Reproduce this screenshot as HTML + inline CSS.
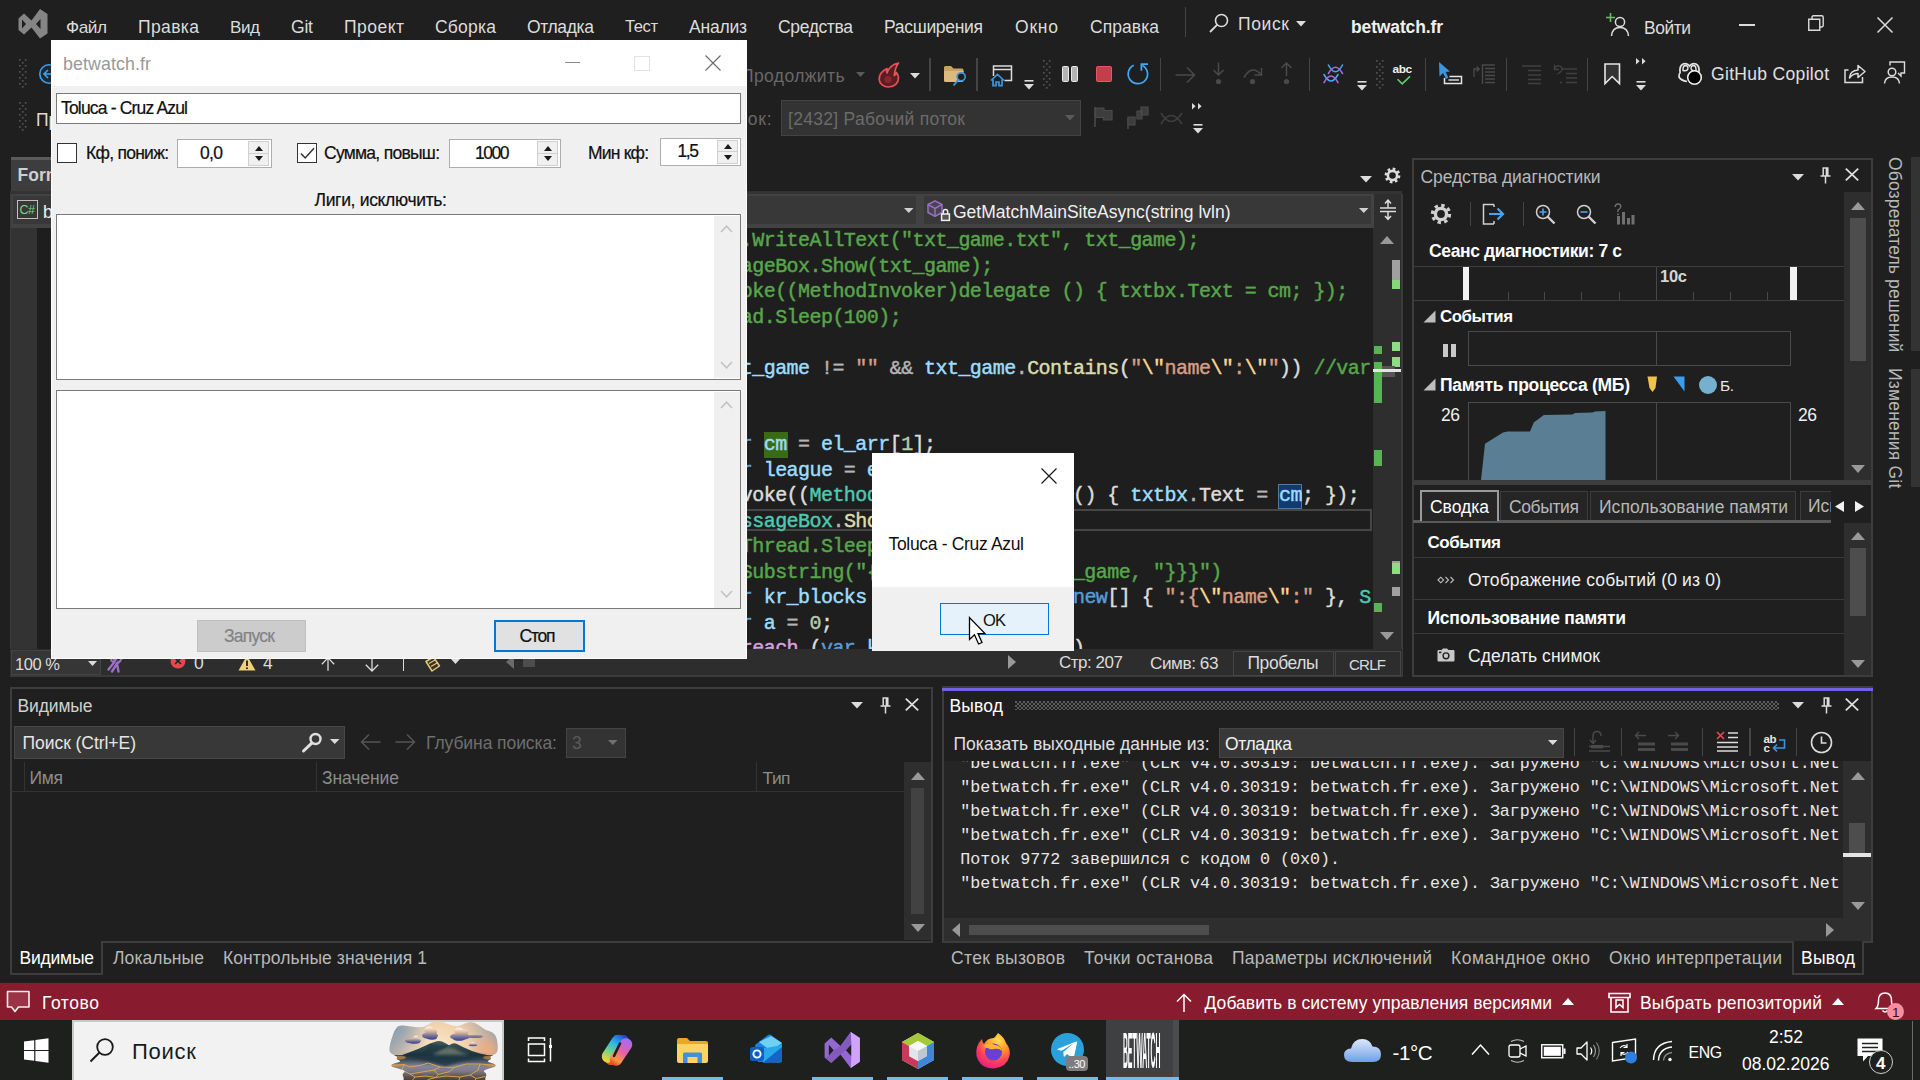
<!DOCTYPE html>
<html lang="ru"><head><meta charset="utf-8"><title>betwatch.fr</title><style>
html,body{margin:0;padding:0;background:#1f1f1f;}
body{width:1920px;height:1080px;position:relative;overflow:hidden;font-family:"Liberation Sans","DejaVu Sans",sans-serif;}
div,span.t,svg{position:absolute;}
span.t{white-space:pre;line-height:1;}
svg{overflow:visible;}
.code span{position:static;}
</style></head><body>
<svg style="left:18px;top:9px;" width="30" height="30" viewBox="0 0 30 30"><path d="M6 4.5 L13.5 11.5 L22 0 L29.5 5 V24.5 L22 29.5 L13.5 18.5 L6 25.5 L0.5 21 V9.5 Z M4 10.5 V19.5 L8 15 Z M22.5 10 V20 L18 15 Z" fill="#858585" fill-rule="evenodd"/></svg>
<span class="t" id="t1" style="left:66px;top:18.92px;font-size:17.22px;color:#dcdcdc;letter-spacing:-0.432px;">Файл</span>
<span class="t" id="t2" style="left:138px;top:18.69px;font-size:17.50px;color:#dcdcdc;letter-spacing:0.375px;">Правка</span>
<span class="t" id="t3" style="left:230px;top:19.05px;font-size:17.07px;color:#dcdcdc;letter-spacing:-0.438px;">Вид</span>
<span class="t" id="t4" style="left:291px;top:18.69px;font-size:17.50px;color:#dcdcdc;letter-spacing:-0.188px;">Git</span>
<span class="t" id="t5" style="left:344px;top:18.69px;font-size:17.50px;color:#dcdcdc;letter-spacing:0.469px;">Проект</span>
<span class="t" id="t6" style="left:435px;top:18.69px;font-size:17.50px;color:#dcdcdc;letter-spacing:0.219px;">Сборка</span>
<span class="t" id="t7" style="left:527px;top:18.69px;font-size:17.50px;color:#dcdcdc;letter-spacing:-0.362px;">Отладка</span>
<span class="t" id="t8" style="left:625px;top:19.45px;font-size:16.60px;color:#dcdcdc;letter-spacing:-0.448px;">Тест</span>
<span class="t" id="t9" style="left:689px;top:18.69px;font-size:17.50px;color:#dcdcdc;letter-spacing:-0.219px;">Анализ</span>
<span class="t" id="t10" style="left:778px;top:18.69px;font-size:17.50px;color:#dcdcdc;letter-spacing:-0.362px;">Средства</span>
<span class="t" id="t11" style="left:884px;top:18.69px;font-size:17.50px;color:#dcdcdc;letter-spacing:-0.309px;">Расширения</span>
<span class="t" id="t12" style="left:1015px;top:18.69px;font-size:17.50px;color:#dcdcdc;letter-spacing:0.776px;">Окно</span>
<span class="t" id="t13" style="left:1090px;top:18.69px;font-size:17.50px;color:#dcdcdc;letter-spacing:0.057px;">Справка</span>
<div style="left:1185px;top:7px;width:1px;height:30px;background:#454545;"></div>
<svg style="left:1208px;top:12px;" width="22" height="22" viewBox="0 0 22 22"><circle cx="13.5" cy="8.5" r="6" fill="none" stroke="#dcdcdc" stroke-width="1.6"/><path d="M9.3 12.7 L2 20" stroke="#dcdcdc" stroke-width="1.8" fill="none"/></svg>
<span class="t" id="t14" style="left:1238px;top:16.19px;font-size:17.50px;color:#dcdcdc;letter-spacing:0.625px;">Поиск</span>
<svg style="left:1296px;top:21px;" width="10" height="6" viewBox="0 0 10 6"><path d="M0 0 H10 L5 5.5 Z" fill="#dcdcdc"/></svg>
<span class="t" id="t15" style="left:1351px;top:19.19px;font-size:17.50px;color:#f0f0f0;font-weight:700;letter-spacing:-0.136px;">betwatch.fr</span>
<svg style="left:1606px;top:13px;" width="24" height="24" viewBox="0 0 24 24"><circle cx="14" cy="9" r="4.6" fill="none" stroke="#dcdcdc" stroke-width="1.5"/><path d="M5.5 23 C6 16.5 10 14.5 14 14.5 C18 14.5 22 16.5 22.5 23" fill="none" stroke="#dcdcdc" stroke-width="1.5"/><path d="M4.5 0 V9 M0 4.5 H9" stroke="#5fc35f" stroke-width="1.6"/></svg>
<span class="t" id="t16" style="left:1644px;top:20.24px;font-size:17.43px;color:#dcdcdc;letter-spacing:-0.441px;">Войти</span>
<div style="left:1739px;top:24px;width:16px;height:1.5px;background:#dcdcdc;"></div>
<svg style="left:1808px;top:15px;" width="16" height="16" viewBox="0 0 16 16"><path d="M0.75 4.25 H11.75 V15.25 H0.75 Z" fill="none" stroke="#dcdcdc" stroke-width="1.4"/><path d="M4 4 V2.2 Q4 0.8 5.4 0.8 H13.8 Q15.2 0.8 15.2 2.2 V10.6 Q15.2 12 13.8 12 H12" fill="none" stroke="#dcdcdc" stroke-width="1.4"/></svg>
<svg style="left:1877px;top:17px;" width="16" height="16" viewBox="0 0 16 16"><path d="M0.5 0.5 L15.5 15.5 M15.5 0.5 L0.5 15.5" stroke="#dcdcdc" stroke-width="1.5"/></svg>
<svg style="left:18.7px;top:58.7px;" width="8" height="29" viewBox="0 0 8 29"><rect x="0" y="0" width="1.7" height="1.7" fill="#525252"/><rect x="5.8" y="0" width="1.7" height="1.7" fill="#525252"/><rect x="2.9" y="3" width="1.7" height="1.7" fill="#525252"/><rect x="0" y="6" width="1.7" height="1.7" fill="#525252"/><rect x="5.8" y="6" width="1.7" height="1.7" fill="#525252"/><rect x="2.9" y="9" width="1.7" height="1.7" fill="#525252"/><rect x="0" y="12" width="1.7" height="1.7" fill="#525252"/><rect x="5.8" y="12" width="1.7" height="1.7" fill="#525252"/><rect x="2.9" y="15" width="1.7" height="1.7" fill="#525252"/><rect x="0" y="18" width="1.7" height="1.7" fill="#525252"/><rect x="5.8" y="18" width="1.7" height="1.7" fill="#525252"/><rect x="2.9" y="21" width="1.7" height="1.7" fill="#525252"/><rect x="0" y="24" width="1.7" height="1.7" fill="#525252"/><rect x="5.8" y="24" width="1.7" height="1.7" fill="#525252"/><rect x="2.9" y="27" width="1.7" height="1.7" fill="#525252"/></svg>
<svg style="left:18.7px;top:101.7px;" width="8" height="29" viewBox="0 0 8 29"><rect x="0" y="0" width="1.7" height="1.7" fill="#525252"/><rect x="5.8" y="0" width="1.7" height="1.7" fill="#525252"/><rect x="2.9" y="3" width="1.7" height="1.7" fill="#525252"/><rect x="0" y="6" width="1.7" height="1.7" fill="#525252"/><rect x="5.8" y="6" width="1.7" height="1.7" fill="#525252"/><rect x="2.9" y="9" width="1.7" height="1.7" fill="#525252"/><rect x="0" y="12" width="1.7" height="1.7" fill="#525252"/><rect x="5.8" y="12" width="1.7" height="1.7" fill="#525252"/><rect x="2.9" y="15" width="1.7" height="1.7" fill="#525252"/><rect x="0" y="18" width="1.7" height="1.7" fill="#525252"/><rect x="5.8" y="18" width="1.7" height="1.7" fill="#525252"/><rect x="2.9" y="21" width="1.7" height="1.7" fill="#525252"/><rect x="0" y="24" width="1.7" height="1.7" fill="#525252"/><rect x="5.8" y="24" width="1.7" height="1.7" fill="#525252"/><rect x="2.9" y="27" width="1.7" height="1.7" fill="#525252"/></svg>
<svg style="left:38px;top:63px;" width="22" height="22" viewBox="0 0 22 22"><circle cx="11" cy="11" r="9.2" fill="#1c2935" stroke="#3fa0ea" stroke-width="1.6"/><path d="M16 11 H6 M10 7 L6 11 L10 15" fill="none" stroke="#3fa0ea" stroke-width="1.6"/></svg>
<span class="t" id="t17" style="left:36px;top:111.69px;font-size:17.50px;color:#dcdcdc;">Процесс:</span>
<span class="t" id="t18" style="left:741px;top:67.69px;font-size:17.50px;color:#686868;letter-spacing:0.384px;">Продолжить</span>
<svg style="left:856px;top:72px;" width="9" height="5" viewBox="0 0 9 5"><path d="M0 0 H9 L4.5 5 Z" fill="#5a5a5a"/></svg>
<svg style="left:878px;top:62px;" width="23" height="26" viewBox="0 0 23 26"><path d="M20.5 1 C15 2 10 6.5 9 11 C8.5 9.5 8.5 8 9 6.5 C4 9 1 13.5 1.2 17.5 C1.5 22 5.5 25 10.5 25 C16.5 25 20.5 21 20.5 16 C20.5 13.5 19.5 12 18.5 10.5 C18 12 17.5 12.8 16.2 13.5 C16.8 9 17.5 5 20.5 1 Z" fill="#5a1d22" stroke="#e8505b" stroke-width="1.7" stroke-linejoin="round"/><circle cx="10" cy="17.5" r="3.6" fill="#8a2630"/></svg>
<svg style="left:910px;top:73px;" width="10" height="6" viewBox="0 0 10 6"><path d="M0 0 H10 L5 5.5 Z" fill="#dcdcdc"/></svg>
<div style="left:929px;top:58px;width:1.5px;height:33px;background:#454545;"></div>
<svg style="left:943px;top:64px;" width="24" height="23" viewBox="0 0 24 23"><path d="M1 3.5 Q1 2 2.5 2 H8 L10.5 4.5 H19 Q20.5 4.5 20.5 6 V8 H1 Z" fill="#c9a35f"/><path d="M1 7 H20.5 V16.5 Q20.5 18 19 18 H2.5 Q1 18 1 16.5 Z" fill="#dcb97c"/><circle cx="18.2" cy="12.8" r="4" fill="#1f1f1f" stroke="#3a96dd" stroke-width="1.7"/><path d="M15.3 15.8 L10.5 21.5" stroke="#3a96dd" stroke-width="1.9"/></svg>
<div style="left:976px;top:58px;width:1.5px;height:33px;background:#454545;"></div>
<svg style="left:990px;top:64px;" width="23" height="23" viewBox="0 0 23 23"><path d="M3.5 12 V2 H21.5 V16.5 H14.5" fill="none" stroke="#dcdcdc" stroke-width="1.5"/><path d="M3.5 5.5 H21.5" stroke="#dcdcdc" stroke-width="1.5"/><path d="M1 16.5 L7.5 10.5 L14 16.5 M3 15.5 V21.7 H6 V18 H9 V21.7 H12 V15.5" fill="none" stroke="#3a96dd" stroke-width="1.7"/></svg>
<svg style="left:1024px;top:80px;" width="10" height="10" viewBox="0 0 10 10"><rect x="0.5" y="0" width="9" height="1.6" fill="#dcdcdc"/><path d="M0 4 H10 L5 9.5 Z" fill="#dcdcdc"/></svg>
<svg style="left:1042.5px;top:59.5px;" width="8" height="29" viewBox="0 0 8 29"><rect x="0" y="0" width="1.7" height="1.7" fill="#525252"/><rect x="5.8" y="0" width="1.7" height="1.7" fill="#525252"/><rect x="2.9" y="3" width="1.7" height="1.7" fill="#525252"/><rect x="0" y="6" width="1.7" height="1.7" fill="#525252"/><rect x="5.8" y="6" width="1.7" height="1.7" fill="#525252"/><rect x="2.9" y="9" width="1.7" height="1.7" fill="#525252"/><rect x="0" y="12" width="1.7" height="1.7" fill="#525252"/><rect x="5.8" y="12" width="1.7" height="1.7" fill="#525252"/><rect x="2.9" y="15" width="1.7" height="1.7" fill="#525252"/><rect x="0" y="18" width="1.7" height="1.7" fill="#525252"/><rect x="5.8" y="18" width="1.7" height="1.7" fill="#525252"/><rect x="2.9" y="21" width="1.7" height="1.7" fill="#525252"/><rect x="0" y="24" width="1.7" height="1.7" fill="#525252"/><rect x="5.8" y="24" width="1.7" height="1.7" fill="#525252"/><rect x="2.9" y="27" width="1.7" height="1.7" fill="#525252"/></svg>
<div style="left:1062px;top:66px;width:6.7px;height:16px;background:#b4b4b4;border:1.5px solid #ececec;box-sizing:border-box;border-radius:1.5px;"></div>
<div style="left:1071.2px;top:66px;width:6.7px;height:16px;background:#b4b4b4;border:1.5px solid #ececec;box-sizing:border-box;border-radius:1.5px;"></div>
<div style="left:1096px;top:66px;width:16px;height:16px;background:#c0404d;border:1.5px solid #f05262;box-sizing:border-box;border-radius:1.5px;"></div>
<svg style="left:1127px;top:61px;" width="24" height="25" viewBox="0 0 24 25"><path d="M6.75 4.2 A9.7 9.7 0 1 0 15.4 4.4" fill="none" stroke="#3fa9f5" stroke-width="1.7"/><path d="M21 3.1 H14.4 V9.8" fill="none" stroke="#3fa9f5" stroke-width="1.8"/></svg>
<div style="left:1159.5px;top:58px;width:1.5px;height:33px;background:#454545;"></div>
<svg style="left:1175px;top:65px;" width="21" height="20" viewBox="0 0 21 20"><path d="M0.5 10 H19.5 M12 2.5 L19.5 10 L12 17.5" fill="none" stroke="#4a4a4a" stroke-width="1.5"/></svg>
<svg style="left:1212px;top:62px;" width="13" height="23" viewBox="0 0 13 23"><path d="M6.5 0.5 V13 M1.5 8 L6.5 13 L11.5 8" fill="none" stroke="#4a4a4a" stroke-width="1.5"/><circle cx="6.5" cy="19.5" r="2.6" fill="#4a4a4a"/></svg>
<svg style="left:1243px;top:66px;" width="21" height="19" viewBox="0 0 21 19"><path d="M1 11.5 Q9 -2 18 8.5 M18.5 2 V9 H11.5" fill="none" stroke="#4a4a4a" stroke-width="1.5"/><circle cx="9.5" cy="15.5" r="2.6" fill="#4a4a4a"/></svg>
<svg style="left:1280px;top:62px;" width="13" height="23" viewBox="0 0 13 23"><path d="M6.5 14 V1 M1.5 6 L6.5 1 L11.5 6" fill="none" stroke="#4a4a4a" stroke-width="1.5"/><circle cx="6.5" cy="19.5" r="2.6" fill="#4a4a4a"/></svg>
<div style="left:1308.5px;top:58px;width:1.5px;height:33px;background:#454545;"></div>
<svg style="left:1322px;top:64px;" width="23" height="20" viewBox="0 0 23 20"><g fill="none" stroke-width="1.6" stroke-linecap="round"><path d="M6.4 1 Q13.5 14.4 20.5 1" stroke="#3fa9f5"/><path d="M6.4 9.5 Q13.5 -2.9 20.5 9.5" stroke="#a86bd0"/><path d="M2 10.5 Q9 23.5 16 10.5" stroke="#3fa9f5"/><path d="M2 18.6 Q9 5.4 16 18.6" stroke="#a86bd0"/></g></svg>
<svg style="left:1357px;top:81px;" width="10" height="10" viewBox="0 0 10 10"><rect x="0.5" y="0" width="9" height="1.6" fill="#dcdcdc"/><path d="M0 4 H10 L5 9.5 Z" fill="#dcdcdc"/></svg>
<svg style="left:1375.5px;top:59.5px;" width="8" height="29" viewBox="0 0 8 29"><rect x="0" y="0" width="1.7" height="1.7" fill="#525252"/><rect x="5.8" y="0" width="1.7" height="1.7" fill="#525252"/><rect x="2.9" y="3" width="1.7" height="1.7" fill="#525252"/><rect x="0" y="6" width="1.7" height="1.7" fill="#525252"/><rect x="5.8" y="6" width="1.7" height="1.7" fill="#525252"/><rect x="2.9" y="9" width="1.7" height="1.7" fill="#525252"/><rect x="0" y="12" width="1.7" height="1.7" fill="#525252"/><rect x="5.8" y="12" width="1.7" height="1.7" fill="#525252"/><rect x="2.9" y="15" width="1.7" height="1.7" fill="#525252"/><rect x="0" y="18" width="1.7" height="1.7" fill="#525252"/><rect x="5.8" y="18" width="1.7" height="1.7" fill="#525252"/><rect x="2.9" y="21" width="1.7" height="1.7" fill="#525252"/><rect x="0" y="24" width="1.7" height="1.7" fill="#525252"/><rect x="5.8" y="24" width="1.7" height="1.7" fill="#525252"/><rect x="2.9" y="27" width="1.7" height="1.7" fill="#525252"/></svg>
<span class="t" id="t19" style="left:1392.5px;top:64.48px;font-size:11.83px;color:#f0f0f0;font-weight:700;letter-spacing:-0.445px;">abc</span>
<svg style="left:1396px;top:75px;" width="16" height="10" viewBox="0 0 16 10"><path d="M1.5 4.2 L6.2 8.9 L14 1.4" fill="none" stroke="#5fd068" stroke-width="1.6"/></svg>
<div style="left:1424.5px;top:58px;width:1.5px;height:33px;background:#454545;"></div>
<svg style="left:1438px;top:61px;" width="26" height="25" viewBox="0 0 26 25"><path d="M1 1 L1.5 15.5 L5 12 L8 18 L10.4 16.8 L7.6 11 L12 10.6 Z" fill="#3a96dd"/><path d="M6.5 17 V22.5 H23.5 V15.5 H11.5" fill="none" stroke="#e6e6e6" stroke-width="1.5"/><path d="M10.5 19 H21" stroke="#e6e6e6" stroke-width="1.4"/></svg>
<svg style="left:1473px;top:64px;" width="23" height="21" viewBox="0 0 23 21"><path d="M1 13 V5 H6 M3.5 2.5 L6.3 5 L3.5 7.5" fill="none" stroke="#4a4a4a" stroke-width="1.3"/><path d="M9.5 20 V1 H22 M12 4.5 H22 M12 8 H22 M12 11.5 H22 M12 15 H22 M12 18.5 H22" fill="none" stroke="#4a4a4a" stroke-width="1.4"/></svg>
<div style="left:1505.5px;top:58px;width:1.5px;height:33px;background:#454545;"></div>
<svg style="left:1521px;top:65px;" width="21" height="19" viewBox="0 0 21 19"><path d="M1 1 H20 M7 5.5 H20 M7 10 H20 M7 14.5 H20 M7 18.5 H20" stroke="#404040" stroke-width="1.4"/></svg>
<svg style="left:1553px;top:64px;" width="25" height="21" viewBox="0 0 25 21"><path d="M1 5 Q5 -1 9 4 Q10 7 4.5 10 M1.5 0.5 V5.5 H6" fill="none" stroke="#404040" stroke-width="1.4"/><path d="M9 5 H24 M13 9.5 H24 M13 14 H24 M13 18.5 H24 M7 18.5 H9" stroke="#404040" stroke-width="1.4"/></svg>
<div style="left:1586.5px;top:58px;width:1.5px;height:33px;background:#454545;"></div>
<svg style="left:1604px;top:63px;" width="17" height="22" viewBox="0 0 17 22"><path d="M1 1 H15.5 V20.5 L8.2 13.5 L1 20.5 Z" fill="#333" stroke="#e6e6e6" stroke-width="1.6" stroke-linejoin="miter"/></svg>
<svg style="left:1636px;top:58px;" width="11" height="7" viewBox="0 0 11 7"><path d="M0 0 L3.6 3.2 L0 6.4 Z M6 0 L9.6 3.2 L6 6.4 Z" fill="#dcdcdc"/></svg>
<svg style="left:1636px;top:81px;" width="10" height="10" viewBox="0 0 10 10"><rect x="0.5" y="0" width="9" height="1.6" fill="#dcdcdc"/><path d="M0 4 H10 L5 9.5 Z" fill="#dcdcdc"/></svg>
<svg style="left:1678px;top:61px;" width="25" height="25" viewBox="0 0 25 25"><path d="M2.2 12 Q1 5 5 3 Q9 1.5 11.5 5 Q14 1.5 18 3 Q22 5 20.8 12 M2.2 11.5 Q0.8 13 1 16 Q3 19.5 9 20.5" fill="none" stroke="#e6e6e6" stroke-width="1.7"/><path d="M7 4.5 Q4.8 5 5 9.5 Q9 10.5 9.8 8 Q10.5 4.5 7 4.5 Z M16 4.5 Q18.2 5 18 9.5 Q14 10.5 13.2 8 Q12.5 4.5 16 4.5 Z" fill="none" stroke="#e6e6e6" stroke-width="1.5"/><circle cx="16.5" cy="16.5" r="6.8" fill="#000" stroke="#f0f0f0" stroke-width="1.6"/></svg>
<span class="t" id="t20" style="left:1711px;top:65.69px;font-size:17.50px;color:#e0e0e0;letter-spacing:0.322px;">GitHub Copilot</span>
<svg style="left:1844px;top:62px;" width="22" height="22" viewBox="0 0 22 22"><path d="M4.5 8 H1 V20.5 H18.5 V15" fill="none" stroke="#dcdcdc" stroke-width="1.5"/><path d="M5.5 16 Q6 8.5 14 8 V3.5 L21 9.5 L14 15.5 V11.5 Q9 11.5 5.5 16 Z" fill="none" stroke="#dcdcdc" stroke-width="1.5" stroke-linejoin="round"/></svg>
<svg style="left:1883px;top:61px;" width="23" height="24" viewBox="0 0 23 24"><path d="M7 4.5 V1 H21.5 V12 H18 V15 L15 12" fill="none" stroke="#dcdcdc" stroke-width="1.4"/><circle cx="9" cy="11" r="3.8" fill="#1f1f1f" stroke="#dcdcdc" stroke-width="1.5"/><path d="M1.5 22.5 Q2 16 9 16 Q16 16 16.5 22.5" fill="#1f1f1f" stroke="#dcdcdc" stroke-width="1.5"/></svg>
<span class="t" id="t21" style="left:716px;top:110.69px;font-size:17.50px;color:#686868;letter-spacing:0.700px;">Поток:</span>
<div style="left:781px;top:100px;width:300px;height:36px;background:#333333;border:1px solid #434343;box-sizing:border-box;"></div>
<span class="t" id="t22" style="left:788px;top:110.69px;font-size:17.50px;color:#6b6b6b;letter-spacing:0.301px;">[2432] Рабочий поток</span>
<svg style="left:1065px;top:115px;" width="10" height="6" viewBox="0 0 10 6"><path d="M0 0 H10 L5 5.5 Z" fill="#5a5a5a"/></svg>
<svg style="left:1093px;top:106px;" width="20" height="22" viewBox="0 0 20 22"><path d="M2 1 V21" stroke="#4a4a4a" stroke-width="1.6"/><path d="M2.5 2 H11 V4.5 H19 V14 H10.5 V11.5 H2.5 Z" fill="#3d3d3d" stroke="#4a4a4a" stroke-width="1.2"/></svg>
<svg style="left:1126px;top:106px;" width="24" height="24" viewBox="0 0 24 24"><path d="M2 12 V23" stroke="#4a4a4a" stroke-width="1.5"/><path d="M2 11 H9 V19 H2 Z M11 5 H16 V13 H11 Z M15 1 H22 V9 H15 Z" fill="#3d3d3d" stroke="#4a4a4a" stroke-width="1.2"/></svg>
<svg style="left:1160px;top:110px;" width="24" height="16" viewBox="0 0 24 16"><path d="M1 3 Q11 20 22 3 M1 14 Q11 -3 22 14" fill="none" stroke="#3f3f3f" stroke-width="1.5"/></svg>
<svg style="left:1192px;top:103px;" width="11" height="7" viewBox="0 0 11 7"><path d="M0 0 L3.6 3.2 L0 6.4 Z M6 0 L9.6 3.2 L6 6.4 Z" fill="#dcdcdc"/></svg>
<svg style="left:1193px;top:124px;" width="10" height="10" viewBox="0 0 10 10"><rect x="0.5" y="0" width="9" height="1.6" fill="#dcdcdc"/><path d="M0 4 H10 L5 9.5 Z" fill="#dcdcdc"/></svg>
<div style="left:11px;top:157px;width:60px;height:34px;background:#3d3d3d;"></div>
<div style="left:11px;top:157px;width:60px;height:3px;background:#5a5a5a;"></div>
<span class="t" id="t23" style="left:17.5px;top:166.69px;font-size:17.50px;color:#cfcfcf;font-weight:700;">Form1.cs</span>
<div style="left:10px;top:191px;width:1392px;height:3px;background:#333333;"></div>
<div style="left:10px;top:194px;width:1364px;height:34px;background:#424242;"></div>
<div style="left:13px;top:196px;width:903px;height:28px;background:#383838;"></div>
<div style="left:924px;top:196px;width:447px;height:28px;background:#383838;"></div>
<div style="left:1374px;top:194px;width:28px;height:34px;background:#2e2e2e;"></div>
<div style="left:16.5px;top:200px;width:21px;height:18.5px;border:1.5px solid #c0c0c0;box-sizing:border-box;"></div>
<span class="t" id="t24" style="left:19.5px;top:204.44px;font-size:12.47px;color:#7fd67f;letter-spacing:-0.453px;">C#</span>
<span class="t" id="t25" style="left:43px;top:203.69px;font-size:17.50px;color:#f0f0f0;">betwatch.fr.Form1</span>
<svg style="left:904px;top:208px;" width="10" height="6" viewBox="0 0 10 6"><path d="M0 0 H9.5 L4.75 5 Z" fill="#d0d0d0"/></svg>
<svg style="left:927px;top:200px;" width="24" height="22" viewBox="0 0 24 22"><path d="M8 0.8 L15 4.5 V12.5 L8 16.3 L1 12.5 V4.5 Z" fill="#4a4352" stroke="#9b6fc4" stroke-width="1.5" stroke-linejoin="round"/><path d="M1 4.5 L8 8.3 L15 4.5 M8 8.3 V16.3" fill="none" stroke="#9b6fc4" stroke-width="1.5"/><rect x="14.6" y="14" width="7.8" height="6.4" fill="#555" stroke="#f0f0f0" stroke-width="1.5"/><path d="M16.3 14 V11.8 Q16.3 9.6 18.5 9.6 Q20.7 9.6 20.7 11.8 V14" fill="none" stroke="#f0f0f0" stroke-width="1.5"/></svg>
<span class="t" id="t26" style="left:953px;top:203.69px;font-size:17.50px;color:#f0f0f0;letter-spacing:0.010px;">GetMatchMainSiteAsync(string lvln)</span>
<svg style="left:1359px;top:208px;" width="10" height="6" viewBox="0 0 10 6"><path d="M0 0 H9.5 L4.75 5 Z" fill="#d0d0d0"/></svg>
<svg style="left:1360px;top:176px;" width="12" height="7" viewBox="0 0 12 7"><path d="M0 0 H12 L6 6.5 Z" fill="#dcdcdc"/></svg>
<svg style="left:1384px;top:167px;" width="17" height="17" viewBox="0 0 17 17"><g fill="none" stroke="#dcdcdc"><circle cx="8.5" cy="8.5" r="4.6" stroke-width="2.6"/><circle cx="8.5" cy="8.5" r="6.6" stroke-width="2.6" stroke-dasharray="2.6 2.58"/></g></svg>
<svg style="left:1379px;top:199px;" width="18" height="22" viewBox="0 0 18 22"><path d="M1 9 H17 M1 12.5 H17" stroke="#dcdcdc" stroke-width="1.5"/><path d="M9 9 V1.5 M6 4.5 L9 1.2 L12 4.5 M9 12.5 V20 M6 17 L9 20.3 L12 17" fill="none" stroke="#dcdcdc" stroke-width="1.5"/></svg>
<div style="left:10px;top:228px;width:1392px;height:421px;background:#1e1e1e;"></div>
<div style="left:9.5px;top:194px;width:1.5px;height:483px;background:#3a3a3a;"></div>
<div style="left:11px;top:228px;width:26px;height:421px;background:#333333;"></div>
<div style="left:1373px;top:228px;width:29px;height:421px;background:#2e2e2e;"></div>
<div style="left:1401px;top:194px;width:2px;height:483px;background:#3a3a3a;"></div>
<svg style="left:1380px;top:236px;" width="14" height="8" viewBox="0 0 14 8"><path d="M7 0 L14 8 H0 Z" fill="#999"/></svg>
<svg style="left:1380px;top:632px;" width="14" height="8" viewBox="0 0 14 8"><path d="M7 8 L14 0 H0 Z" fill="#999"/></svg>
<div style="left:1392px;top:260px;width:8px;height:20px;background:#a0a0a0;"></div>
<div style="left:1392px;top:279.5px;width:8px;height:9px;background:#86d67b;"></div>
<div style="left:1374px;top:346px;width:8px;height:8px;background:#57b356;"></div>
<div style="left:1374px;top:361.5px;width:8px;height:41.5px;background:#57b356;"></div>
<div style="left:1392px;top:342px;width:8px;height:9px;background:#8fdc86;"></div>
<div style="left:1392px;top:357px;width:8px;height:9.5px;background:#8fdc86;"></div>
<div style="left:1382px;top:366px;width:13px;height:11px;background:#555;"></div>
<div style="left:1373px;top:369px;width:28px;height:3px;background:#e4e4e4;"></div>
<div style="left:1374px;top:449.5px;width:8px;height:16.5px;background:#57b356;"></div>
<div style="left:1392px;top:561px;width:8px;height:2px;background:#a0a0a0;"></div>
<div style="left:1392px;top:563px;width:8px;height:11px;background:#8fdc86;"></div>
<div style="left:1392px;top:586.5px;width:8px;height:9.5px;background:#a0a0a0;"></div>
<div style="left:1374px;top:602.5px;width:8px;height:9.5px;background:#57b356;"></div>
<div style="left:764px;top:432px;width:23.5px;height:25.5px;background:#3b6a16;"></div>
<div style="left:1278px;top:483.5px;width:23.5px;height:25.5px;background:#113a6e;border:1px solid #4f7aa8;box-sizing:border-box;"></div>
<div style="left:60px;top:509px;width:1312px;height:22px;border:2px solid #464646;box-sizing:border-box;"></div>
<span class="t code" style="left:740.80px;top:231.07px;font-family:'Liberation Mono','DejaVu Sans Mono',monospace;font-size:20px;letter-spacing:-0.550px;-webkit-text-stroke:0.45px currentColor;"><span style="color:#57a64a">.WriteAllText("txt_game.txt", txt_game);</span></span>
<span class="t code" style="left:740.80px;top:256.57px;font-family:'Liberation Mono','DejaVu Sans Mono',monospace;font-size:20px;letter-spacing:-0.550px;-webkit-text-stroke:0.45px currentColor;"><span style="color:#57a64a">ageBox.Show(txt_game);</span></span>
<span class="t code" style="left:740.80px;top:282.07px;font-family:'Liberation Mono','DejaVu Sans Mono',monospace;font-size:20px;letter-spacing:-0.550px;-webkit-text-stroke:0.45px currentColor;"><span style="color:#57a64a">oke((MethodInvoker)delegate () { txtbx.Text = cm; });</span></span>
<span class="t code" style="left:740.80px;top:307.57px;font-family:'Liberation Mono','DejaVu Sans Mono',monospace;font-size:20px;letter-spacing:-0.550px;-webkit-text-stroke:0.45px currentColor;"><span style="color:#57a64a">ad.Sleep(100);</span></span>
<span class="t code" style="left:740.80px;top:358.57px;font-family:'Liberation Mono','DejaVu Sans Mono',monospace;font-size:20px;letter-spacing:-0.550px;-webkit-text-stroke:0.45px currentColor;"><span style="color:#9cdcfe">t_game</span><span style="color:#b4b4b4"> != </span><span style="color:#d69d85">""</span><span style="color:#b4b4b4"> &amp;&amp; </span><span style="color:#9cdcfe">txt_game</span><span style="color:#b4b4b4">.</span><span style="color:#dcdcaa">Contains</span><span style="color:#dcdcdc">(</span><span style="color:#d69d85">"</span><span style="color:#ffd68f">\"</span><span style="color:#d69d85">name</span><span style="color:#ffd68f">\"</span><span style="color:#d69d85">:</span><span style="color:#ffd68f">\"</span><span style="color:#d69d85">"</span><span style="color:#dcdcdc">))</span><span style="color:#dcdcdc"> </span><span style="color:#57a64a">//var</span></span>
<span class="t code" style="left:740.80px;top:435.07px;font-family:'Liberation Mono','DejaVu Sans Mono',monospace;font-size:20px;letter-spacing:-0.550px;-webkit-text-stroke:0.45px currentColor;"><span style="color:#569cd6">r</span><span style="color:#dcdcdc"> </span><span style="color:#9cdcfe">cm</span><span style="color:#b4b4b4"> = </span><span style="color:#9cdcfe">el_arr</span><span style="color:#dcdcdc">[</span><span style="color:#b5cea8">1</span><span style="color:#dcdcdc">];</span></span>
<span class="t code" style="left:740.80px;top:460.57px;font-family:'Liberation Mono','DejaVu Sans Mono',monospace;font-size:20px;letter-spacing:-0.550px;-webkit-text-stroke:0.45px currentColor;"><span style="color:#569cd6">r</span><span style="color:#dcdcdc"> </span><span style="color:#9cdcfe">league</span><span style="color:#b4b4b4"> = </span><span style="color:#9cdcfe">el_arr</span><span style="color:#dcdcdc">[</span><span style="color:#b5cea8">2</span><span style="color:#dcdcdc">];</span></span>
<span class="t code" style="left:740.80px;top:486.07px;font-family:'Liberation Mono','DejaVu Sans Mono',monospace;font-size:20px;letter-spacing:-0.550px;-webkit-text-stroke:0.45px currentColor;"><span style="color:#dcdcdc">voke</span><span style="color:#dcdcdc">((</span><span style="color:#4ec9b0">MethodInvoker</span><span style="color:#dcdcdc">)</span><span style="color:#569cd6">delegate</span><span style="color:#dcdcdc"> () { </span><span style="color:#9cdcfe">txtbx</span><span style="color:#b4b4b4">.</span><span style="color:#dcdcdc">Text</span><span style="color:#b4b4b4"> = </span><span style="color:#9cdcfe">cm</span><span style="color:#dcdcdc">; });</span></span>
<span class="t code" style="left:740.80px;top:511.57px;font-family:'Liberation Mono','DejaVu Sans Mono',monospace;font-size:20px;letter-spacing:-0.550px;-webkit-text-stroke:0.45px currentColor;"><span style="color:#4ec9b0">ssageBox</span><span style="color:#b4b4b4">.</span><span style="color:#dcdcaa">Show</span><span style="color:#dcdcdc">(</span><span style="color:#9cdcfe">cm</span><span style="color:#dcdcdc">);</span></span>
<span class="t code" style="left:740.80px;top:537.07px;font-family:'Liberation Mono','DejaVu Sans Mono',monospace;font-size:20px;letter-spacing:-0.550px;-webkit-text-stroke:0.45px currentColor;"><span style="color:#57a64a">Thread.Sleep(100);</span></span>
<span class="t code" style="left:740.80px;top:562.57px;font-family:'Liberation Mono','DejaVu Sans Mono',monospace;font-size:20px;letter-spacing:-0.550px;-webkit-text-stroke:0.45px currentColor;"><span style="color:#57a64a">Substring("{\"name\":\"", txt_game, "}}}")</span></span>
<span class="t code" style="left:740.80px;top:588.07px;font-family:'Liberation Mono','DejaVu Sans Mono',monospace;font-size:20px;letter-spacing:-0.550px;-webkit-text-stroke:0.45px currentColor;"><span style="color:#569cd6">r</span><span style="color:#dcdcdc"> </span><span style="color:#9cdcfe">kr_blocks</span><span style="color:#b4b4b4"> = </span><span style="color:#9cdcfe">txt_game</span><span style="color:#b4b4b4">.</span><span style="color:#dcdcaa">Split</span><span style="color:#dcdcdc">(</span><span style="color:#569cd6">new</span><span style="color:#dcdcdc">[] { </span><span style="color:#d69d85">":{</span><span style="color:#ffd68f">\"</span><span style="color:#d69d85">name</span><span style="color:#ffd68f">\"</span><span style="color:#d69d85">:"</span><span style="color:#dcdcdc"> }, </span><span style="color:#4ec9b0">S</span></span>
<span class="t code" style="left:740.80px;top:613.57px;font-family:'Liberation Mono','DejaVu Sans Mono',monospace;font-size:20px;letter-spacing:-0.550px;-webkit-text-stroke:0.45px currentColor;"><span style="color:#569cd6">r</span><span style="color:#dcdcdc"> </span><span style="color:#9cdcfe">a</span><span style="color:#b4b4b4"> = </span><span style="color:#b5cea8">0</span><span style="color:#dcdcdc">;</span></span>
<span class="t code" style="left:740.80px;top:639.07px;font-family:'Liberation Mono','DejaVu Sans Mono',monospace;font-size:20px;letter-spacing:-0.550px;-webkit-text-stroke:0.45px currentColor;"><span style="color:#d8a0df">reach</span><span style="color:#dcdcdc"> (</span><span style="color:#569cd6">var</span><span style="color:#dcdcdc"> </span><span style="color:#9cdcfe">kr_block</span><span style="color:#dcdcdc"> </span><span style="color:#d8a0df">in</span><span style="color:#dcdcdc"> </span><span style="color:#9cdcfe">blocks</span><span style="color:#dcdcdc">)</span></span>
<div style="left:10px;top:649px;width:1392px;height:26px;background:#2d2d2d;"></div>
<div style="left:9.5px;top:675px;width:1393.5px;height:2px;background:#3a3a3a;"></div>
<div style="left:11px;top:650px;width:90px;height:24.5px;background:#363636;border:1px solid #444444;box-sizing:border-box;"></div>
<span class="t" id="t27" style="left:15px;top:655.53px;font-size:16.50px;color:#dcdcdc;letter-spacing:-0.449px;">100 %</span>
<svg style="left:88px;top:661px;" width="9" height="5" viewBox="0 0 9 5"><path d="M0 0 H9 L4.5 5 Z" fill="#dcdcdc"/></svg>
<svg style="left:106px;top:653px;" width="18" height="20" viewBox="0 0 18 20"><path d="M2.5 16.5 L8 9.5 M6 18.5 L11 10.5 L12.5 18.5" fill="none" stroke="#9b6fc4" stroke-width="2.4" stroke-linecap="round"/><path d="M8 9.5 Q4 8 5 3 Q8 6 9 8 Q11 3 15.5 3 Q16 8 11 10.5" fill="none" stroke="#9b6fc4" stroke-width="2"/></svg>
<svg style="left:170px;top:653px;" width="16" height="16" viewBox="0 0 16 16"><circle cx="8" cy="8" r="7.5" fill="#e5484d"/><path d="M5 5 L11 11 M11 5 L5 11" stroke="#1f1f1f" stroke-width="1.6"/></svg>
<span class="t" id="t28" style="left:194px;top:654.69px;font-size:17.50px;color:#dcdcdc;letter-spacing:0.000px;">0</span>
<svg style="left:238px;top:655px;" width="18" height="16" viewBox="0 0 18 16"><path d="M9 0.5 L17.5 15.5 H0.5 Z" fill="#f0d080"/><path d="M9 5.5 V11" stroke="#1f1f1f" stroke-width="1.8"/><circle cx="9" cy="13.3" r="1" fill="#1f1f1f"/></svg>
<span class="t" id="t29" style="left:263px;top:654.69px;font-size:17.50px;color:#dcdcdc;letter-spacing:0.000px;">4</span>
<svg style="left:320.5px;top:657px;" width="14" height="14" viewBox="0 0 14 14"><path d="M7 13.8 V0.9 M0.8 7.2 L7 0.9 L13.2 7.2" fill="none" stroke="#dcdcdc" stroke-width="1.3"/></svg>
<svg style="left:364.5px;top:653.5px;" width="14" height="18" viewBox="0 0 14 18"><path d="M7 0 V17 M0.8 10.7 L7 17 L13.2 10.7" fill="none" stroke="#dcdcdc" stroke-width="1.3"/></svg>
<div style="left:403px;top:655px;width:1px;height:16px;background:#dcdcdc;"></div>
<svg style="left:424px;top:653px;" width="18" height="19" viewBox="0 0 18 19"><path d="M2 8.5 L9.5 4 L15.5 13 L8 18 Z" fill="#3a3428" stroke="#e8c97a" stroke-width="1.5" stroke-linejoin="round"/><path d="M5 10.5 L11 7 M7 13.5 L13 10" stroke="#e8c97a" stroke-width="1.1"/><path d="M11.5 5 L16.5 0.5" stroke="#cfcfcf" stroke-width="1.4"/></svg>
<svg style="left:451px;top:659px;" width="10" height="6" viewBox="0 0 10 6"><path d="M0 0 H9 L4.5 5 Z" fill="#dcdcdc"/></svg>
<svg style="left:506px;top:655px;" width="8" height="14" viewBox="0 0 8 14"><path d="M8 0 V14 L0 7 Z" fill="#6a6a6a"/></svg>
<div style="left:523px;top:657px;width:12px;height:10px;background:#4d4d4d;"></div>
<svg style="left:1008px;top:655px;" width="8" height="14" viewBox="0 0 8 14"><path d="M0 0 V14 L8 7 Z" fill="#999"/></svg>
<span class="t" id="t30" style="left:1059px;top:655.15px;font-size:16.95px;color:#dcdcdc;letter-spacing:-0.442px;">Стр: 207</span>
<span class="t" id="t31" style="left:1150px;top:654.95px;font-size:17.19px;color:#dcdcdc;letter-spacing:-0.449px;">Симв: 63</span>
<div style="left:1233px;top:651px;width:101px;height:25px;border:1px solid #454545;box-sizing:border-box;"></div>
<span class="t" id="t32" style="left:1247.5px;top:654.71px;font-size:17.47px;color:#dcdcdc;letter-spacing:-0.438px;">Пробелы</span>
<div style="left:1335px;top:651px;width:66px;height:25px;border:1px solid #454545;box-sizing:border-box;"></div>
<span class="t" id="t33" style="left:1349px;top:656.76px;font-size:15.05px;color:#dcdcdc;letter-spacing:-0.766px;">CRLF</span>
<div style="left:1412px;top:157.5px;width:461px;height:519.5px;background:#1f1f1f;border:2px solid #3d3d3d;box-sizing:border-box;"></div>
<span class="t" id="t34" style="left:1420.5px;top:168.69px;font-size:17.50px;color:#b8b8b8;letter-spacing:-0.099px;">Средства диагностики</span>
<svg style="left:1792px;top:174px;" width="12" height="6.5" viewBox="0 0 12 6.5"><path d="M0 0 H12 L6.0 6.5 Z" fill="#dcdcdc"/></svg>
<svg style="left:1820px;top:167px;" width="11" height="17" viewBox="0 0 11 17"><path d="M2.5 1 H8.5 M3.2 1 V8.5 M7.8 1 V8.5 M6.4 1 V8.5 M0.5 9 H10.5 M5.5 9 V16.5" fill="none" stroke="#dcdcdc" stroke-width="1.5"/></svg>
<svg style="left:1845px;top:168px;" width="14" height="13" viewBox="0 0 14 13"><path d="M0.8 0.6 L13.2 12.4 M13.2 0.6 L0.8 12.4" stroke="#dcdcdc" stroke-width="1.9"/></svg>
<svg style="left:1430px;top:203px;" width="22" height="22" viewBox="0 0 22 22"><g fill="none" stroke="#d0d0d0"><circle cx="11" cy="11" r="5.6" stroke-width="3.4"/><circle cx="11" cy="11" r="8.6" stroke-width="3.2" stroke-dasharray="3.4 3.35"/></g></svg>
<div style="left:1470px;top:202px;width:1px;height:24px;background:#454545;"></div>
<svg style="left:1482px;top:203px;" width="23" height="23" viewBox="0 0 23 23"><path d="M12 1.5 H1.5 V21 H12 M12 1.5 V4 M12 18 V21" fill="none" stroke="#d0d0d0" stroke-width="1.5"/><path d="M7 11 H21 M15.5 5.5 L21 11 L15.5 16.5" fill="none" stroke="#4aa3f0" stroke-width="2.2"/></svg>
<div style="left:1523px;top:202px;width:1px;height:24px;background:#454545;"></div>
<svg style="left:1535px;top:204px;" width="21" height="21" viewBox="0 0 21 21"><circle cx="8" cy="8" r="6.5" fill="none" stroke="#d0d0d0" stroke-width="1.5"/><path d="M12.5 12.5 L19.5 19.5" stroke="#d0d0d0" stroke-width="2.4"/><path d="M4.5 8 H11.5 M8 4.5 V11.5" stroke="#4aa3f0" stroke-width="1.6"/></svg>
<svg style="left:1576px;top:204px;" width="21" height="21" viewBox="0 0 21 21"><circle cx="8" cy="8" r="6.5" fill="none" stroke="#d0d0d0" stroke-width="1.5"/><path d="M12.5 12.5 L19.5 19.5" stroke="#d0d0d0" stroke-width="2.4"/><path d="M4.5 8 H11.5" stroke="#4aa3f0" stroke-width="1.6"/></svg>
<svg style="left:1614px;top:203px;" width="21" height="22" viewBox="0 0 21 22"><path d="M1 4 Q1.5 0.8 4.5 1 Q7.5 1.5 6.5 4.5 Q5.5 6.5 4 7 V9" fill="none" stroke="#707070" stroke-width="1.4"/><rect x="3" y="13" width="3" height="8.5" fill="#707070"/><rect x="8" y="9" width="3" height="12.5" fill="#707070"/><rect x="13" y="15" width="3" height="6.5" fill="#707070"/><rect x="17.5" y="12" width="3" height="9.5" fill="#707070"/><rect x="3.2" y="10.5" width="1.6" height="1.6" fill="#707070"/></svg>
<span class="t" id="t35" style="left:1429px;top:242.69px;font-size:17.50px;color:#ffffff;font-weight:700;letter-spacing:-0.371px;">Сеанс диагностики: 7 с</span>
<div style="left:1413px;top:266px;width:431px;height:1px;background:#3d3d3d;"></div>
<div style="left:1413px;top:299.5px;width:431px;height:1px;background:#3d3d3d;"></div>
<div style="left:1462.5px;top:267px;width:6.5px;height:33px;background:#f2f2f2;"></div>
<div style="left:1789.5px;top:267px;width:7.5px;height:33px;background:#f2f2f2;"></div>
<div style="left:1507.5px;top:292px;width:1px;height:8px;background:#484848;"></div>
<div style="left:1544px;top:292px;width:1px;height:8px;background:#484848;"></div>
<div style="left:1581px;top:292px;width:1px;height:8px;background:#484848;"></div>
<div style="left:1618.5px;top:292px;width:1px;height:8px;background:#484848;"></div>
<div style="left:1692.5px;top:292px;width:1px;height:8px;background:#484848;"></div>
<div style="left:1730px;top:292px;width:1px;height:8px;background:#484848;"></div>
<div style="left:1767px;top:292px;width:1px;height:8px;background:#484848;"></div>
<div style="left:1656px;top:267px;width:1px;height:33px;background:#484848;"></div>
<span class="t" id="t36" style="left:1660px;top:267.53px;font-size:16.50px;color:#d6d6d6;font-weight:700;letter-spacing:-0.266px;">10с</span>
<svg style="left:1422.5px;top:310px;" width="13" height="13" viewBox="0 0 13 13"><path d="M12.5 0.5 V12.5 H0.5 Z" fill="#bdbdbd"/></svg>
<span class="t" id="t37" style="left:1440px;top:309.24px;font-size:16.85px;color:#ffffff;font-weight:700;letter-spacing:-0.448px;">События</span>
<div style="left:1468px;top:331px;width:322.5px;height:35px;border:1px solid #4a4a4a;box-sizing:border-box;"></div>
<div style="left:1656px;top:331px;width:1px;height:35px;background:#4a4a4a;"></div>
<div style="left:1442.5px;top:344px;width:5px;height:13px;background:#c8c8c8;"></div>
<div style="left:1450.5px;top:344px;width:5px;height:13px;background:#c8c8c8;"></div>
<svg style="left:1422.5px;top:378px;" width="13" height="13" viewBox="0 0 13 13"><path d="M12.5 0.5 V12.5 H0.5 Z" fill="#bdbdbd"/></svg>
<span class="t" id="t38" style="left:1440px;top:376.69px;font-size:17.50px;color:#ffffff;font-weight:700;letter-spacing:-0.261px;">Память процесса (МБ)</span>
<svg style="left:1647px;top:376px;" width="11" height="17" viewBox="0 0 11 17"><path d="M0.5 0.5 H10 L8.5 12 L5.5 16 L2.5 12 Z" fill="#f2c14e"/></svg>
<svg style="left:1673px;top:376px;" width="12" height="16" viewBox="0 0 12 16"><path d="M0.5 0.5 H11.5 V15.5 Z" fill="#3a9df0"/></svg>
<div style="left:1699px;top:375.5px;width:18px;height:18px;border-radius:50%;background:#76b0cf;"></div>
<span class="t" id="t39" style="left:1720px;top:378.42px;font-size:15.46px;color:#e6e6e6;letter-spacing:-0.438px;">Б.</span>
<div style="left:1468px;top:402px;width:322.5px;height:78px;border:1px solid #4a4a4a;box-sizing:border-box;border-bottom:none;"></div>
<div style="left:1656px;top:402px;width:1px;height:78px;background:#4a4a4a;"></div>
<svg style="left:1468px;top:402px;" width="322" height="78" viewBox="0 0 322 78"><path d="M13 78 L17 41.8 L35 30.5 L39.5 29.5 L62 29.5 L65.8 20.5 L75.8 13 L104.5 12.5 L107 11 L124.5 10.5 L127 9.5 L137.5 9 L137.5 78 Z" fill="#5a7f94"/></svg>
<span class="t" id="t40" style="left:1441px;top:407.20px;font-size:17.48px;color:#f0f0f0;letter-spacing:-0.438px;">26</span>
<span class="t" id="t41" style="left:1798px;top:407.20px;font-size:17.48px;color:#f0f0f0;letter-spacing:-0.438px;">26</span>
<div style="left:1844px;top:192px;width:27px;height:288px;background:#2e2e2e;"></div>
<svg style="left:1851px;top:202px;" width="14" height="8" viewBox="0 0 14 8"><path d="M7 0 L14 8 H0 Z" fill="#999"/></svg>
<svg style="left:1851px;top:465px;" width="14" height="8" viewBox="0 0 14 8"><path d="M7 8 L14 0 H0 Z" fill="#999"/></svg>
<div style="left:1850px;top:218px;width:16px;height:143px;background:#4d4d4d;"></div>
<div style="left:1413px;top:480px;width:458px;height:5px;background:#3d3d3d;"></div>
<div style="left:1413px;top:520px;width:418px;height:3px;background:#5a5a5a;"></div>
<div style="left:1420px;top:490px;width:79px;height:31px;background:#252526;border:2px solid #9a9a9a;box-sizing:border-box;border-bottom:none;"></div>
<span class="t" id="t42" style="left:1430px;top:498.69px;font-size:17.50px;color:#ffffff;letter-spacing:-0.016px;">Сводка</span>
<div style="left:1500px;top:491px;width:88px;height:29px;background:#252526;border:1px solid #3d3d3d;box-sizing:border-box;border-bottom:none;"></div>
<span class="t" id="t43" style="left:1509px;top:498.69px;font-size:17.50px;color:#b8b8b8;letter-spacing:-0.375px;">События</span>
<div style="left:1590px;top:491px;width:206px;height:29px;background:#252526;border:1px solid #3d3d3d;box-sizing:border-box;border-bottom:none;"></div>
<span class="t" id="t44" style="left:1599px;top:498.69px;font-size:17.50px;color:#b8b8b8;letter-spacing:0.030px;">Использование памяти</span>
<div style="left:1799.5px;top:491px;width:31.5px;height:29px;background:#252526;border:1px solid #3d3d3d;box-sizing:border-box;border-bottom:none;border-right:none;overflow:hidden;"></div>
<div style="left:1800px;top:491px;width:31px;height:29px;overflow:hidden;"><span class="t" style="left:8px;top:6.7px;font-size:17.5px;color:#b8b8b8;">Использование ЦП</span></div>
<svg style="left:1835px;top:501px;" width="9" height="11" viewBox="0 0 9 11"><path d="M9 0 V11 L0 5.5 Z" fill="#f0f0f0"/></svg>
<svg style="left:1855px;top:501px;" width="9" height="11" viewBox="0 0 9 11"><path d="M0 0 V11 L9 5.5 Z" fill="#f0f0f0"/></svg>
<span class="t" id="t45" style="left:1427.5px;top:534.64px;font-size:16.96px;color:#ffffff;font-weight:700;letter-spacing:-0.435px;">События</span>
<div style="left:1413px;top:557px;width:431px;height:1px;background:#3a3a3a;"></div>
<svg style="left:1437px;top:575px;" width="18" height="10" viewBox="0 0 18 10"><path d="M1 5 L3.8 2.2 L6.6 5 L3.8 7.8 Z M8.5 2 L11.5 5 L8.5 8 M13.5 2 L16.5 5 L13.5 8" fill="none" stroke="#bdbdbd" stroke-width="1.1"/></svg>
<span class="t" id="t46" style="left:1468px;top:571.69px;font-size:17.50px;color:#f0f0f0;letter-spacing:0.167px;">Отображение событий (0 из 0)</span>
<div style="left:1413px;top:599px;width:431px;height:1px;background:#3a3a3a;"></div>
<span class="t" id="t47" style="left:1427.5px;top:609.69px;font-size:17.50px;color:#ffffff;font-weight:700;letter-spacing:-0.234px;">Использование памяти</span>
<div style="left:1413px;top:633px;width:431px;height:1px;background:#3a3a3a;"></div>
<svg style="left:1437px;top:648.3px;" width="18" height="14" viewBox="0 0 18 14"><path d="M0.5 3 Q0.5 2 1.5 2 H4.5 L6 0.5 H10 L11.5 2 H16.5 Q17.5 2 17.5 3 V12.5 Q17.5 13.5 16.5 13.5 H1.5 Q0.5 13.5 0.5 12.5 Z" fill="#c8c8c8"/><circle cx="9" cy="7.8" r="3.6" fill="#1f1f1f"/><circle cx="9" cy="7.8" r="2.2" fill="#c8c8c8"/><rect x="2" y="3.6" width="2.4" height="1.6" fill="#1f1f1f"/></svg>
<span class="t" id="t48" style="left:1468px;top:647.69px;font-size:17.50px;color:#f0f0f0;letter-spacing:0.064px;">Сделать снимок</span>
<div style="left:1844px;top:523px;width:27px;height:152px;background:#2e2e2e;"></div>
<svg style="left:1851px;top:532px;" width="14" height="8" viewBox="0 0 14 8"><path d="M7 0 L14 8 H0 Z" fill="#999"/></svg>
<svg style="left:1851px;top:660px;" width="14" height="8" viewBox="0 0 14 8"><path d="M7 8 L14 0 H0 Z" fill="#999"/></svg>
<div style="left:1850px;top:548px;width:16px;height:68px;background:#4d4d4d;"></div>
<span class="t" style="left:1902.5px;top:157px;font-size:17.5px;color:#b8b8b8;transform-origin:0 0;transform:rotate(90deg);letter-spacing:0.14px;">Обозреватель решений</span>
<span class="t" style="left:1902.5px;top:368px;font-size:17.5px;color:#b8b8b8;transform-origin:0 0;transform:rotate(90deg);letter-spacing:0.2px;">Изменения Git</span>
<div style="left:1911px;top:157px;width:9px;height:194px;background:#333333;"></div>
<div style="left:1911px;top:369px;width:9px;height:118px;background:#333333;"></div>
<div style="left:9.5px;top:686.5px;width:923px;height:256px;background:#1f1f1f;border:2px solid #3d3d3d;box-sizing:border-box;"></div>
<span class="t" id="t49" style="left:17.5px;top:698.19px;font-size:17.50px;color:#d0d0d0;letter-spacing:-0.130px;">Видимые</span>
<svg style="left:851px;top:702px;" width="12" height="6.5" viewBox="0 0 12 6.5"><path d="M0 0 H12 L6.0 6.5 Z" fill="#dcdcdc"/></svg>
<svg style="left:880px;top:697px;" width="11" height="17" viewBox="0 0 11 17"><path d="M2.5 1 H8.5 M3.2 1 V8.5 M7.8 1 V8.5 M6.4 1 V8.5 M0.5 9 H10.5 M5.5 9 V16.5" fill="none" stroke="#dcdcdc" stroke-width="1.5"/></svg>
<svg style="left:905px;top:698px;" width="14" height="13" viewBox="0 0 14 13"><path d="M0.8 0.6 L13.2 12.4 M13.2 0.6 L0.8 12.4" stroke="#dcdcdc" stroke-width="1.9"/></svg>
<div style="left:14px;top:725.5px;width:331px;height:33.5px;background:#383838;border:1px solid #474747;box-sizing:border-box;"></div>
<span class="t" id="t50" style="left:22.5px;top:734.69px;font-size:17.50px;color:#e6e6e6;letter-spacing:-0.048px;">Поиск (Ctrl+E)</span>
<svg style="left:302px;top:732px;" width="21" height="21" viewBox="0 0 21 21"><circle cx="13.5" cy="7" r="5" fill="none" stroke="#e0e0e0" stroke-width="2.4"/><path d="M10 10.8 L1.5 19" stroke="#e0e0e0" stroke-width="3" stroke-linecap="round"/></svg>
<svg style="left:330px;top:739px;" width="10" height="6" viewBox="0 0 10 6"><path d="M0 0 H9.5 L4.75 5 Z" fill="#dcdcdc"/></svg>
<svg style="left:360px;top:733px;" width="21" height="18" viewBox="0 0 21 18"><path d="M20.5 9 H1.5 M9 1.5 L1.5 9 L9 16.5" fill="none" stroke="#555" stroke-width="1.5"/></svg>
<svg style="left:395px;top:733px;" width="21" height="18" viewBox="0 0 21 18"><path d="M0.5 9 H19.5 M12 1.5 L19.5 9 L12 16.5" fill="none" stroke="#555" stroke-width="1.5"/></svg>
<span class="t" id="t51" style="left:426px;top:734.69px;font-size:17.50px;color:#6e6e6e;letter-spacing:-0.078px;">Глубина поиска:</span>
<div style="left:566px;top:727.5px;width:60px;height:30.5px;background:#333333;border:1px solid #444;box-sizing:border-box;"></div>
<span class="t" id="t52" style="left:572px;top:734.69px;font-size:17.50px;color:#5a5a5a;">3</span>
<svg style="left:608px;top:740px;" width="10" height="6" viewBox="0 0 10 6"><path d="M0 0 H9.5 L4.75 5 Z" fill="#707070"/></svg>
<span class="t" id="t53" style="left:29.5px;top:769.69px;font-size:17.50px;color:#8c8c8c;letter-spacing:-0.297px;">Имя</span>
<span class="t" id="t54" style="left:322px;top:769.69px;font-size:17.50px;color:#8c8c8c;letter-spacing:-0.087px;">Значение</span>
<span class="t" id="t55" style="left:762.5px;top:769.83px;font-size:17.33px;color:#8c8c8c;letter-spacing:-0.445px;">Тип</span>
<div style="left:23.5px;top:762px;width:1px;height:29px;background:#333;"></div>
<div style="left:316px;top:762px;width:1px;height:29px;background:#333;"></div>
<div style="left:756px;top:762px;width:1px;height:29px;background:#333;"></div>
<div style="left:11px;top:791px;width:893px;height:1px;background:#333;"></div>
<div style="left:904px;top:762px;width:26.5px;height:178px;background:#2e2e2e;"></div>
<svg style="left:911px;top:772px;" width="14" height="8" viewBox="0 0 14 8"><path d="M7 0 L14 8 H0 Z" fill="#999"/></svg>
<svg style="left:911px;top:924px;" width="14" height="8" viewBox="0 0 14 8"><path d="M7 8 L14 0 H0 Z" fill="#999"/></svg>
<div style="left:911px;top:788px;width:13px;height:126px;background:#424242;"></div>
<div style="left:9.5px;top:940.5px;width:93.5px;height:34px;background:#1f1f1f;border:2px solid #3d3d3d;box-sizing:border-box;border-top:none;"></div>
<span class="t" id="t56" style="left:19.5px;top:950.19px;font-size:17.50px;color:#ffffff;letter-spacing:-0.214px;">Видимые</span>
<span class="t" id="t57" style="left:113px;top:950.19px;font-size:17.50px;color:#b8b8b8;letter-spacing:0.088px;">Локальные</span>
<span class="t" id="t58" style="left:223px;top:950.19px;font-size:17.50px;color:#b8b8b8;letter-spacing:0.083px;">Контрольные значения 1</span>
<div style="left:941.5px;top:686px;width:931px;height:256.5px;background:#1f1f1f;border:2px solid #3d3d3d;box-sizing:border-box;"></div>
<div style="left:941.5px;top:687.8px;width:931px;height:3.6px;background:#7160e8;"></div>
<span class="t" id="t59" style="left:949.5px;top:698.19px;font-size:17.50px;color:#ffffff;letter-spacing:0.145px;">Вывод</span>
<div style="left:1015px;top:701px;width:764px;height:9px;background-image:radial-gradient(circle at 1px 1px,#5c5c5c 0.9px,transparent 1.2px),radial-gradient(circle at 3px 3px,#5c5c5c 0.9px,transparent 1.2px);background-size:4px 4px;"></div>
<svg style="left:1792px;top:702px;" width="12" height="6.5" viewBox="0 0 12 6.5"><path d="M0 0 H12 L6.0 6.5 Z" fill="#dcdcdc"/></svg>
<svg style="left:1820.5px;top:697px;" width="11" height="17" viewBox="0 0 11 17"><path d="M2.5 1 H8.5 M3.2 1 V8.5 M7.8 1 V8.5 M6.4 1 V8.5 M0.5 9 H10.5 M5.5 9 V16.5" fill="none" stroke="#dcdcdc" stroke-width="1.5"/></svg>
<svg style="left:1845px;top:698px;" width="14" height="13" viewBox="0 0 14 13"><path d="M0.8 0.6 L13.2 12.4 M13.2 0.6 L0.8 12.4" stroke="#dcdcdc" stroke-width="1.9"/></svg>
<span class="t" id="t60" style="left:953.5px;top:735.69px;font-size:17.50px;color:#e0e0e0;letter-spacing:0.030px;">Показать выходные данные из:</span>
<div style="left:1218.5px;top:727.5px;width:345.5px;height:30.5px;background:#383838;border:1px solid #474747;box-sizing:border-box;"></div>
<span class="t" id="t61" style="left:1225px;top:736.19px;font-size:17.50px;color:#f0f0f0;letter-spacing:-0.362px;">Отладка</span>
<svg style="left:1548px;top:740px;" width="10" height="6" viewBox="0 0 10 6"><path d="M0 0 H9.5 L4.75 5 Z" fill="#dcdcdc"/></svg>
<div style="left:1573.5px;top:728px;width:1.5px;height:28px;background:#454545;"></div>
<div style="left:1620.5px;top:728px;width:1.5px;height:28px;background:#454545;"></div>
<div style="left:1701.5px;top:728px;width:1.5px;height:28px;background:#454545;"></div>
<div style="left:1749px;top:728px;width:1.5px;height:28px;background:#454545;"></div>
<div style="left:1795.5px;top:728px;width:1.5px;height:28px;background:#454545;"></div>
<svg style="left:1588px;top:730px;" width="23" height="23" viewBox="0 0 23 23"><path d="M5 13 V6 Q5 1.5 9 1.5 Q13 1.5 13 6 M2 10 L5 13.5 L8 10" fill="none" stroke="#4a4a4a" stroke-width="1.4"/><path d="M1 16.5 H22 M1 21 H22" stroke="#4a4a4a" stroke-width="1.5"/><rect x="3" y="15" width="12" height="3.4" fill="#4a4a4a"/></svg>
<svg style="left:1634px;top:731px;" width="22" height="21" viewBox="0 0 22 21"><path d="M12 4.5 H1.5 M5 1 L1.5 4.5 L5 8" fill="none" stroke="#4a4a4a" stroke-width="1.4"/><rect x="4" y="11.5" width="17" height="3" fill="#4a4a4a"/><rect x="4" y="17" width="17" height="3" fill="#4a4a4a"/></svg>
<svg style="left:1667px;top:731px;" width="22" height="21" viewBox="0 0 22 21"><path d="M1 4.5 H11.5 M8 1 L11.5 4.5 L8 8" fill="none" stroke="#4a4a4a" stroke-width="1.4"/><rect x="4" y="11.5" width="17" height="3" fill="#4a4a4a"/><rect x="4" y="17" width="17" height="3" fill="#4a4a4a"/></svg>
<svg style="left:1716px;top:731px;" width="23" height="21" viewBox="0 0 23 21"><path d="M1 1 L8 8 M8 1 L1 8" stroke="#e5484d" stroke-width="1.7"/><path d="M12 2 H22 M12 6.5 H22 M1 11.5 H22 M1 16 H22 M1 20 H22" stroke="#dcdcdc" stroke-width="1.4"/></svg>
<span class="t" id="t62" style="left:1763.5px;top:733.77px;font-size:11.50px;color:#e6e6e6;font-weight:700;letter-spacing:-0.422px;">ab</span>
<span class="t" id="t63" style="left:1763.5px;top:743.27px;font-size:11.50px;color:#e6e6e6;font-weight:700;">c</span>
<svg style="left:1771px;top:737px;" width="15" height="16" viewBox="0 0 15 16"><path d="M8 3 H13.5 V11 H2.5 M6 7.5 L2.5 11 L6 14.5" fill="none" stroke="#3a96dd" stroke-width="1.6"/></svg>
<svg style="left:1810px;top:731px;" width="23" height="23" viewBox="0 0 23 23"><circle cx="11.5" cy="11.5" r="10" fill="none" stroke="#dcdcdc" stroke-width="1.6"/><path d="M11.5 5.5 V12 H16.5" fill="none" stroke="#dcdcdc" stroke-width="1.6"/></svg>
<div style="left:943.5px;top:760.5px;width:899.5px;height:157.5px;background:#252526;overflow:hidden;"></div>
<div style="left:943.5px;top:760.5px;width:899.5px;height:157.5px;overflow:hidden;"><span class="t" style="left:16.70px;top:-4.80px;font-family:'Liberation Mono','DejaVu Sans Mono',monospace;font-size:16.7px;letter-spacing:-0.020px;color:#e8e8e8;">"betwatch.fr.exe" (CLR v4.0.30319: betwatch.fr.exe). Загружено "C:\WINDOWS\Microsoft.Net</span></div>
<div style="left:943.5px;top:760.5px;width:899.5px;height:157.5px;overflow:hidden;"><span class="t" style="left:16.70px;top:19.20px;font-family:'Liberation Mono','DejaVu Sans Mono',monospace;font-size:16.7px;letter-spacing:-0.020px;color:#e8e8e8;">"betwatch.fr.exe" (CLR v4.0.30319: betwatch.fr.exe). Загружено "C:\WINDOWS\Microsoft.Net</span></div>
<div style="left:943.5px;top:760.5px;width:899.5px;height:157.5px;overflow:hidden;"><span class="t" style="left:16.70px;top:43.20px;font-family:'Liberation Mono','DejaVu Sans Mono',monospace;font-size:16.7px;letter-spacing:-0.020px;color:#e8e8e8;">"betwatch.fr.exe" (CLR v4.0.30319: betwatch.fr.exe). Загружено "C:\WINDOWS\Microsoft.Net</span></div>
<div style="left:943.5px;top:760.5px;width:899.5px;height:157.5px;overflow:hidden;"><span class="t" style="left:16.70px;top:67.20px;font-family:'Liberation Mono','DejaVu Sans Mono',monospace;font-size:16.7px;letter-spacing:-0.020px;color:#e8e8e8;">"betwatch.fr.exe" (CLR v4.0.30319: betwatch.fr.exe). Загружено "C:\WINDOWS\Microsoft.Net</span></div>
<div style="left:943.5px;top:760.5px;width:899.5px;height:157.5px;overflow:hidden;"><span class="t" style="left:16.70px;top:91.20px;font-family:'Liberation Mono','DejaVu Sans Mono',monospace;font-size:16.7px;letter-spacing:-0.020px;color:#e8e8e8;">Поток 9772 завершился с кодом 0 (0x0).</span></div>
<div style="left:943.5px;top:760.5px;width:899.5px;height:157.5px;overflow:hidden;"><span class="t" style="left:16.70px;top:115.20px;font-family:'Liberation Mono','DejaVu Sans Mono',monospace;font-size:16.7px;letter-spacing:-0.020px;color:#e8e8e8;">"betwatch.fr.exe" (CLR v4.0.30319: betwatch.fr.exe). Загружено "C:\WINDOWS\Microsoft.Net</span></div>
<div style="left:1843px;top:760.5px;width:28px;height:157.5px;background:#2e2e2e;"></div>
<svg style="left:1851px;top:772px;" width="14" height="8" viewBox="0 0 14 8"><path d="M7 0 L14 8 H0 Z" fill="#999"/></svg>
<svg style="left:1851px;top:902px;" width="14" height="8" viewBox="0 0 14 8"><path d="M7 8 L14 0 H0 Z" fill="#999"/></svg>
<div style="left:1849px;top:823px;width:16px;height:30px;background:#4d4d4d;"></div>
<div style="left:1843px;top:853px;width:28px;height:4px;background:#e4e4e4;"></div>
<div style="left:943.5px;top:918px;width:927.5px;height:22.5px;background:#2e2e2e;"></div>
<svg style="left:952px;top:922.5px;" width="8" height="14" viewBox="0 0 8 14"><path d="M8 0 V14 L0 7 Z" fill="#999"/></svg>
<svg style="left:1826px;top:922.5px;" width="8" height="14" viewBox="0 0 8 14"><path d="M0 0 V14 L8 7 Z" fill="#999"/></svg>
<div style="left:969px;top:925px;width:240px;height:10px;background:#4d4d4d;"></div>
<span class="t" id="t64" style="left:951px;top:950.19px;font-size:17.50px;color:#b8b8b8;letter-spacing:0.338px;">Стек вызовов</span>
<span class="t" id="t65" style="left:1084px;top:950.19px;font-size:17.50px;color:#b8b8b8;letter-spacing:0.357px;">Точки останова</span>
<span class="t" id="t66" style="left:1232px;top:950.19px;font-size:17.50px;color:#b8b8b8;letter-spacing:0.234px;">Параметры исключений</span>
<span class="t" id="t67" style="left:1451px;top:950.19px;font-size:17.50px;color:#b8b8b8;letter-spacing:0.512px;">Командное окно</span>
<span class="t" id="t68" style="left:1609px;top:950.19px;font-size:17.50px;color:#b8b8b8;letter-spacing:0.309px;">Окно интерпретации</span>
<div style="left:1791.5px;top:940.5px;width:72.5px;height:34px;background:#1f1f1f;border:2px solid #3d3d3d;box-sizing:border-box;border-top:none;"></div>
<span class="t" id="t69" style="left:1801px;top:950.19px;font-size:17.50px;color:#ffffff;letter-spacing:0.270px;">Вывод</span>
<div style="left:0px;top:983px;width:1920px;height:37px;background:#881b2d;"></div>
<svg style="left:6px;top:990px;" width="25" height="24" viewBox="0 0 25 24"><path d="M1.5 1.5 H23 V17 H12.5 L9 21.5 L5.5 17 H1.5 Z" fill="#9a3345" stroke="#f0f0f0" stroke-width="1.6" stroke-linejoin="round"/></svg>
<span class="t" id="t70" style="left:42px;top:994.69px;font-size:17.50px;color:#ffffff;letter-spacing:0.591px;">Готово</span>
<svg style="left:1176px;top:993px;" width="16" height="19" viewBox="0 0 16 19"><path d="M8 19 V1.5 M1 8.5 L8 1.5 L15 8.5" fill="none" stroke="#ffffff" stroke-width="1.5"/></svg>
<span class="t" id="t71" style="left:1204.5px;top:994.69px;font-size:17.50px;color:#ffffff;letter-spacing:0.048px;">Добавить в систему управления версиями</span>
<svg style="left:1562px;top:998px;" width="12" height="7" viewBox="0 0 12 7"><path d="M6 0 L12 7 H0 Z" fill="#ffffff"/></svg>
<svg style="left:1608px;top:992px;" width="23" height="21" viewBox="0 0 23 21"><path d="M1 1.5 H22 V5.5 H1 Z M3 5.5 V20 H20 V5.5" fill="none" stroke="#ffffff" stroke-width="1.6"/><path d="M8 8 V15.5 L11.5 12.5 L15 15.5 V8 Z" fill="none" stroke="#ffffff" stroke-width="1.5"/></svg>
<span class="t" id="t72" style="left:1640px;top:994.69px;font-size:17.50px;color:#ffffff;letter-spacing:0.196px;">Выбрать репозиторий</span>
<svg style="left:1832px;top:998px;" width="12" height="7" viewBox="0 0 12 7"><path d="M6 0 L12 7 H0 Z" fill="#ffffff"/></svg>
<svg style="left:1874px;top:991px;" width="22" height="23" viewBox="0 0 22 23"><path d="M2 17.5 Q4.5 15 4.5 9.5 Q4.5 2 11 2 Q17.5 2 17.5 9.5 Q17.5 15 20 17.5 Z M8.5 19.5 Q11 22.5 13.5 19.5" fill="none" stroke="#ffffff" stroke-width="1.5"/></svg>
<div style="left:1886.5px;top:1002.5px;width:17.5px;height:17.5px;border-radius:50%;background:#f78da0;"></div>
<span class="t" id="t73" style="left:1892px;top:1005.57px;font-size:13.50px;color:#3a0a14;">1</span>
<div style="left:0px;top:1020px;width:1920px;height:60px;background:#1e201e;"></div>
<svg style="left:24px;top:1038px;" width="25" height="25" viewBox="0 0 25 25"><path d="M0 3.6 L10.2 2.2 V11.9 H0 Z M11.4 2 L24.5 0.2 V11.9 H11.4 Z M0 13.1 H10.2 V22.8 L0 21.4 Z M11.4 13.1 H24.5 V24.8 L11.4 23 Z" fill="#ffffff"/></svg>
<div style="left:72px;top:1020px;width:431.5px;height:62px;background:#f2f2f2;border:2px solid #c8cac9;box-sizing:border-box;"></div>
<svg style="left:89px;top:1037px;" width="26" height="26" viewBox="0 0 26 26"><circle cx="16" cy="10" r="7.8" fill="none" stroke="#1a1a1a" stroke-width="1.8"/><path d="M10.5 15.5 L1.5 24.5" stroke="#1a1a1a" stroke-width="2"/></svg>
<span class="t" id="t74" style="left:132px;top:1041.38px;font-size:22.00px;color:#1a1a1a;letter-spacing:0.758px;">Поиск</span>
<svg style="left:388px;top:1020px;overflow:hidden;" width="112" height="60" viewBox="0 0 112 60"><defs>
<radialGradient id="sky" cx="52" cy="30" r="58" gradientUnits="userSpaceOnUse"><stop offset="0" stop-color="#fde9cb"/><stop offset="0.5" stop-color="#f1d0ab"/><stop offset="0.8" stop-color="#c4b3a5"/><stop offset="1" stop-color="#98a3ad"/></radialGradient>
<radialGradient id="blu" cx="8" cy="8" r="34" gradientUnits="userSpaceOnUse"><stop offset="0" stop-color="#7d9db8" stop-opacity="0.8"/><stop offset="1" stop-color="#6f97b8" stop-opacity="0"/></radialGradient>
<radialGradient id="org" cx="100" cy="31" r="20" gradientUnits="userSpaceOnUse"><stop offset="0" stop-color="#f4ab7c" stop-opacity="0.9"/><stop offset="1" stop-color="#f4ab7c" stop-opacity="0"/></radialGradient>
<linearGradient id="mt" x1="0" y1="21" x2="0" y2="36" gradientUnits="userSpaceOnUse"><stop offset="0" stop-color="#3e5b5e"/><stop offset="1" stop-color="#17303b"/></linearGradient>
<linearGradient id="gd" x1="0" y1="35" x2="0" y2="61" gradientUnits="userSpaceOnUse"><stop offset="0" stop-color="#1c3641"/><stop offset="0.18" stop-color="#3b4a55"/><stop offset="0.42" stop-color="#85849a"/><stop offset="0.62" stop-color="#7f7a86"/><stop offset="0.85" stop-color="#5b5048"/><stop offset="1" stop-color="#3f3a36"/></linearGradient>
<linearGradient id="cg" x1="0" y1="0" x2="0" y2="1"><stop offset="0" stop-color="#fff3de"/><stop offset="0.45" stop-color="#dcc0a8"/><stop offset="1" stop-color="#4558a0"/></linearGradient>
<filter id="b1" x="-20%" y="-20%" width="140%" height="140%"><feGaussianBlur stdDeviation="0.65"/></filter>
<filter id="b2" x="-20%" y="-20%" width="140%" height="140%"><feGaussianBlur stdDeviation="1.6"/></filter>
<clipPath id="blob"><path d="M2.0 32.0 Q1.0 30.0 2.0 25.0 Q3.0 20.0 5.5 13.5 Q8.0 7.0 11.0 6.0 Q14.0 5.0 19.0 6.0 Q24.0 7.0 30.0 7.2 Q36.0 7.5 39.0 5.2 Q42.0 3.0 45.5 1.8 Q49.0 0.5 53.0 1.8 Q57.0 3.0 61.5 4.5 Q66.0 6.0 69.0 6.0 Q72.0 6.0 75.0 4.2 Q78.0 2.5 81.5 2.2 Q85.0 2.0 88.0 3.5 Q91.0 5.0 94.0 7.5 Q97.0 10.0 101.0 11.0 Q105.0 12.0 107.0 15.0 Q109.0 18.0 109.5 24.0 Q110.0 30.0 109.0 32.0 Q108.0 34.0 104.5 35.2 Q101.0 36.5 102.5 37.8 Q104.0 39.0 101.0 40.2 Q98.0 41.5 102.5 42.8 Q107.0 44.0 107.5 45.2 Q108.0 46.5 103.5 47.8 Q99.0 49.0 97.0 50.0 Q95.0 51.0 97.0 52.5 Q99.0 54.0 98.0 56.0 Q97.0 58.0 97.5 60.5 Q98.0 63.0 56.5 63.0 Q15.0 63.0 15.5 60.5 Q16.0 58.0 15.0 56.0 Q14.0 54.0 16.0 52.5 Q18.0 51.0 15.0 50.0 Q12.0 49.0 7.5 47.8 Q3.0 46.5 3.5 45.2 Q4.0 44.0 9.0 42.8 Q14.0 41.5 11.0 40.2 Q8.0 39.0 9.0 37.8 Q10.0 36.5 6.5 35.2 Q3.0 34.0 2.0 32.0 Z"/></clipPath></defs>
<g clip-path="url(#blob)">
<rect x="0" y="0" width="112" height="36" fill="url(#sky)"/>
<rect x="0" y="0" width="112" height="36" fill="url(#blu)"/>
<rect x="0" y="0" width="112" height="36" fill="url(#org)"/>
<rect x="0" y="35" width="112" height="27" fill="url(#gd)"/>
<ellipse cx="11" cy="37.5" rx="7" ry="2" fill="#c98a3d" opacity="0.75" filter="url(#b1)"/><ellipse cx="102" cy="37.5" rx="7" ry="2" fill="#c98a3d" opacity="0.75" filter="url(#b1)"/>
<ellipse cx="8" cy="45.5" rx="7" ry="1.8" fill="#b98a4a" opacity="0.7" filter="url(#b1)"/><ellipse cx="104" cy="45.5" rx="6" ry="1.8" fill="#b98a4a" opacity="0.7" filter="url(#b1)"/>
<path d="M14 35 H100 L72 42 L57 47 L42 42 Z" fill="#1b3440" opacity="0.85" filter="url(#b2)"/>
<linearGradient id="cg1" x1="0" y1="6.4" x2="0" y2="19.7" gradientUnits="userSpaceOnUse"><stop offset="0" stop-color="#fffaf0"/><stop offset="0.4" stop-color="#d3b096"/><stop offset="0.7" stop-color="#77719c"/><stop offset="1" stop-color="#2c4194"/></linearGradient><g fill="url(#cg1)" filter="url(#b1)"><ellipse cx="41" cy="10" rx="4.5" ry="3.6"/><ellipse cx="45" cy="12" rx="4" ry="3"/><ellipse cx="42" cy="15.5" rx="8" ry="3.6"/><ellipse cx="44" cy="17.5" rx="5" ry="2.2"/></g>
<linearGradient id="cg2" x1="0" y1="7.8" x2="0" y2="20.8" gradientUnits="userSpaceOnUse"><stop offset="0" stop-color="#fffaf0"/><stop offset="0.4" stop-color="#d3b096"/><stop offset="0.7" stop-color="#77719c"/><stop offset="1" stop-color="#2c4194"/></linearGradient><g fill="url(#cg2)" filter="url(#b1)"><ellipse cx="71" cy="11" rx="5" ry="3.2"/><ellipse cx="76" cy="12.5" rx="4.5" ry="3"/><ellipse cx="72" cy="16.5" rx="10" ry="3.6"/><ellipse cx="71" cy="18.8" rx="6" ry="2"/><ellipse cx="87" cy="16.5" rx="8" ry="1.6"/></g>
<linearGradient id="cg3" x1="0" y1="15.5" x2="0" y2="23.599999999999998" gradientUnits="userSpaceOnUse"><stop offset="0" stop-color="#fffaf0"/><stop offset="0.4" stop-color="#d3b096"/><stop offset="0.7" stop-color="#77719c"/><stop offset="1" stop-color="#2c4194"/></linearGradient><g fill="url(#cg3)" filter="url(#b1)"><ellipse cx="28" cy="17.5" rx="2.5" ry="2"/><ellipse cx="25" cy="20.8" rx="8" ry="2.6"/><ellipse cx="27" cy="22.2" rx="5" ry="1.4"/></g>
<linearGradient id="cg4" x1="0" y1="22.3" x2="0" y2="26.2" gradientUnits="userSpaceOnUse"><stop offset="0" stop-color="#fffaf0"/><stop offset="0.4" stop-color="#d3b096"/><stop offset="0.7" stop-color="#77719c"/><stop offset="1" stop-color="#2c4194"/></linearGradient><g fill="url(#cg4)" filter="url(#b1)"><ellipse cx="85" cy="23.7" rx="2.2" ry="1.4"/><ellipse cx="85" cy="25.0" rx="4.2" ry="1.2"/></g>
<path d="M13 35.6 L30 29 L42 23.6 L48 21.4 Q51 20.6 54 21.6 L58 23.4 L61 25.2 L64 23.8 Q66.5 22.8 69 24 L76 27.5 L84 31 L92 33.6 L101 35.6 Z" fill="url(#mt)"/>
<path d="M44 35 L54 29.5 L60 27.6 L66 28.6 L74 32.5 L82 35 Z" fill="#8b917d" opacity="0.6" filter="url(#b2)"/>
<path d="M42 23.8 L52 25.5 L61 25.4 L56 28.5 L48 31 L34 34 Z" fill="#1d3841" opacity="0.55" filter="url(#b1)"/>
<g fill="none" stroke="#e3ac45" stroke-width="0.95" stroke-linejoin="round" opacity="0.95">
<path d="M3 45.5 L16 44.5 L22 47 L34 45 L40 43 L52 47 L66 47.5 L78 44 L92 44 L108 45.5"/>
<path d="M16 44.5 L14 50 L22 54 L27 57 L23 62"/><path d="M22 54 L34 52 L46 50 L52 47"/>
<path d="M46 50 L50 54.5 L62 51.5 L66 47.5"/><path d="M50 54.5 L48 57.5 L58 56 L72 57 L82 55 L90 50 L92 44"/>
<path d="M82 55 L88 58.5 L97 56.5"/><path d="M48 57.5 L40 59.5 L37 63"/><path d="M72 57 L70 63"/><path d="M88 58.5 L86 63"/><path d="M27 57 L38 56 L48 57.5"/></g>
</g></svg>
<svg style="left:527px;top:1037px;" width="26" height="26" viewBox="0 0 26 26"><path d="M1.5 4 V1 H17.5 V4 M1.5 21.5 V24.5 H17.5 V21.5" fill="none" stroke="#ffffff" stroke-width="1.5"/><rect x="1.5" y="7" width="16" height="11.5" fill="none" stroke="#ffffff" stroke-width="1.5"/><path d="M23.5 1 V24.5" stroke="#ffffff" stroke-width="1.5"/><rect x="22" y="8" width="3" height="3" fill="#ffffff"/></svg>
<svg style="left:598px;top:1032px;" width="38" height="36" viewBox="0 0 38 36"><defs><linearGradient id="cp1" x1="22" y1="3" x2="6" y2="28" gradientUnits="userSpaceOnUse"><stop offset="0" stop-color="#1f5fe0"/><stop offset="0.35" stop-color="#2fb7e8"/><stop offset="0.65" stop-color="#6fd38a"/><stop offset="1" stop-color="#f4d23a"/></linearGradient><linearGradient id="cp2" x1="32" y1="10" x2="16" y2="33" gradientUnits="userSpaceOnUse"><stop offset="0" stop-color="#a66cf2"/><stop offset="0.45" stop-color="#e85fa6"/><stop offset="0.8" stop-color="#f79a3e"/><stop offset="1" stop-color="#e8452a"/></linearGradient></defs>
<path d="M16 3 H25 Q29 3 30.5 7 L32 12 H24 Z" fill="#1d4fd0"/>
<path d="M22 33 H13 Q9 33 7.5 29 L6.5 25 H15 Z" fill="#e8502e"/>
<path d="M20 9 L10 24.5" stroke="url(#cp1)" stroke-width="12.5" stroke-linecap="round" fill="none"/>
<path d="M28 12.5 L18 27.5" stroke="url(#cp2)" stroke-width="12.5" stroke-linecap="round" fill="none"/>
<path d="M22 11.5 L16 24" stroke="#1e201e" stroke-width="2.6" stroke-linecap="round" fill="none"/></svg>
<svg style="left:676px;top:1037px;" width="33" height="27" viewBox="0 0 33 27"><path d="M1 3 Q1 1 3 1 H11 L14 4 H30 Q32 4 32 6 V9 H1 Z" fill="#e9a824"/><path d="M1 7 H32 V24 Q32 26 30 26 H3 Q1 26 1 24 Z" fill="#fdd464"/><path d="M7 26 V17 Q7 15.5 8.5 15.5 H24.5 Q26 15.5 26 17 V26 H21.5 V20 H11.5 V26 Z" fill="#3f8fdf"/></svg>
<svg style="left:749px;top:1033px;" width="35" height="34" viewBox="0 0 35 34"><path d="M6 12 L19 2 Q20.5 1 22 2 L33 10 V26 Q33 29 30 29 H9 Z" fill="#1a7fe0"/><path d="M10 9 L22 3 L33 10 L22 18 Z" fill="#6fd0f5"/><path d="M12 16 L33 12 V27 Q33 29.5 30.5 29.5 H14 Z" fill="#28a8ea"/><path d="M14 29.5 L33 14 V27 Q33 29.5 30.5 29.5 Z" fill="#1565c8"/><rect x="1" y="14" width="14" height="14" rx="2.5" fill="#0f5fc0"/><circle cx="8" cy="21" r="3.6" fill="none" stroke="#ffffff" stroke-width="1.9"/></svg>
<svg style="left:824px;top:1032px;" width="36.5" height="36.5" viewBox="0 0 30 30"><path d="M6 4.5 L13.5 11.5 L22 0 L29.5 5 V24.5 L22 29.5 L13.5 18.5 L6 25.5 L0.5 21 V9.5 Z M4 10.5 V19.5 L8 15 Z M22.5 10 V20 L18 15 Z" fill="#9567d0" fill-rule="evenodd"/><path d="M0.5 21 L4 19.5 L8 15 L13.5 11.5 L22 0 L22.5 10 L18 15 L13.5 18.5 L6 25.5 Z" fill="#7d55b8" opacity="0.75"/><path d="M22 0 L29.5 5 V24.5 L22 29.5 L22.5 20 V10 Z" fill="#cfa3f8"/></svg>
<svg style="left:901px;top:1032px;" width="34" height="38" viewBox="0 0 34 38"><path d="M17 1 L33 10 V28 L17 37 L1 28 V10 Z" fill="#ececec"/><path d="M17 1 L33 10 L26 14 L17 9 L8 14 L1 10 Z" fill="#a5c839"/><path d="M1 10 L8 14 V24 L17 29 V37 L1 28 Z" fill="#c93a5a"/><path d="M33 10 L26 14 V24 L17 29 V37 L33 28 Z" fill="#3f86d9"/><path d="M17 9 L26 14 L17 19 L8 14 Z" fill="#f7f7f7"/><path d="M8 14 L17 19 V29 L8 24 Z" fill="#e2e6ea"/><path d="M26 14 L17 19 V29 L26 24 Z" fill="#bfc8d0"/></svg>
<svg style="left:975px;top:1032px;" width="36" height="37" viewBox="0 0 36 37"><defs><radialGradient id="ff" cx="65%" cy="20%" r="90%"><stop offset="0" stop-color="#ffe14a"/><stop offset="0.35" stop-color="#ff9a2e"/><stop offset="0.7" stop-color="#ff3b5c"/><stop offset="1" stop-color="#d81b8c"/></radialGradient></defs>
<path d="M23 1 Q29 5 31 11 Q36 17 34.5 24 Q32 35 19 36.5 Q5 36.5 1.5 24 Q0 14 7 7 Q7 10 9 12 Q12 6 19 6 Q21 4 23 1 Z" fill="url(#ff)"/><circle cx="18.5" cy="20" r="8.6" fill="#6a3fd6"/><path d="M8 14 Q14 10 20 13 Q26 13 27 19 Q24 16 19 17 Q15 18 13 16 Q10 16 8 14 Z" fill="#ffb32e"/></svg>
<div style="left:1051px;top:1033px;width:33px;height:33px;border-radius:50%;background:#2aa1da;"></div>
<svg style="left:1051px;top:1033px;" width="33" height="33" viewBox="0 0 33 33"><path d="M6.5 16 L25 8.5 Q26.5 8 26 10 L23 24 Q22.5 25.5 21 24.7 L16 21 L13.5 23.5 Q12.8 24 12.7 23 L12.3 19 L22 10.8 L10.5 17.8 L6.7 16.8 Q5.8 16.4 6.5 16 Z" fill="#ffffff"/></svg>
<div style="left:1066px;top:1056px;width:22px;height:15px;background:#7d7d7d;border-radius:4px;"></div>
<span class="t" id="t75" style="left:1068.5px;top:1059.19px;font-size:11.00px;color:#ffffff;letter-spacing:-0.453px;">..30</span>
<div style="left:1106px;top:1020px;width:67px;height:60px;background:#3e4042;"></div>
<div style="left:1173px;top:1020px;width:6px;height:60px;background:#4a4c4e;"></div>
<span class="t" style="left:1123px;top:1026.2px;font-size:13px;font-weight:700;color:#ffffff;transform-origin:0 0;transform:scale(0.53,3.8);letter-spacing:-0.3px;">BETWATCH</span>
<div style="left:662px;top:1077px;width:61px;height:3px;background:#76b9ed;"></div>
<div style="left:812px;top:1077px;width:61px;height:3px;background:#76b9ed;"></div>
<div style="left:887px;top:1077px;width:61px;height:3px;background:#76b9ed;"></div>
<div style="left:962px;top:1077px;width:61px;height:3px;background:#76b9ed;"></div>
<div style="left:1037px;top:1077px;width:61px;height:3px;background:#76b9ed;"></div>
<div style="left:1106px;top:1077px;width:73px;height:3px;background:#76b9ed;"></div>
<svg style="left:1343px;top:1037px;" width="39" height="26" viewBox="0 0 39 26"><defs><linearGradient id="cl" x1="0" y1="0" x2="0" y2="1"><stop offset="0" stop-color="#dbe9fb"/><stop offset="1" stop-color="#6f9fe8"/></linearGradient></defs><path d="M9 25 Q1 25 1 18 Q1 12 8 11.5 Q10 2 19.5 2 Q27 2 29.5 9.5 Q38 9.5 38 17.5 Q38 25 30 25 Z" fill="url(#cl)"/></svg>
<span class="t" id="t76" style="left:1392.5px;top:1043.10px;font-size:20.56px;color:#ffffff;letter-spacing:-0.443px;">-1°C</span>
<svg style="left:1471px;top:1043px;" width="19" height="13" viewBox="0 0 19 13"><path d="M1 11.5 L9.5 2 L18 11.5" fill="none" stroke="#ffffff" stroke-width="1.5"/></svg>
<svg style="left:1508px;top:1038px;" width="20" height="26" viewBox="0 0 20 26"><rect x="1" y="7" width="11" height="12" rx="2" fill="none" stroke="#ffffff" stroke-width="1.3"/><path d="M12 11 L18 8 V18 L12 15" fill="none" stroke="#ffffff" stroke-width="1.3"/><path d="M3 3.5 Q9.5 0 16 3.5 M3 22.5 Q9.5 26 16 22.5" fill="none" stroke="#bdbdbd" stroke-width="1.1"/></svg>
<svg style="left:1541px;top:1044px;" width="25" height="15" viewBox="0 0 25 15"><rect x="0.75" y="0.75" width="21" height="13" fill="none" stroke="#ffffff" stroke-width="1.4"/><rect x="2.8" y="2.8" width="17" height="9" fill="#ffffff"/><rect x="22.5" y="4.5" width="2" height="5.5" fill="#ffffff"/></svg>
<svg style="left:1576px;top:1040px;" width="25" height="22" viewBox="0 0 25 22"><path d="M1 8 H5 L11 2 V20 L5 14 H1 Z" fill="none" stroke="#ffffff" stroke-width="1.3" stroke-linejoin="round"/><path d="M14.5 7.5 Q17 11 14.5 14.5" fill="none" stroke="#ffffff" stroke-width="1.2"/><path d="M17.5 5 Q21.5 11 17.5 17" fill="none" stroke="#9a9a9a" stroke-width="1.2"/><path d="M20.5 2.5 Q26 11 20.5 19.5" fill="none" stroke="#7a7a7a" stroke-width="1.2"/></svg>
<svg style="left:1611px;top:1038px;" width="27" height="26" viewBox="0 0 27 26"><path d="M1.5 4.5 L24.5 1 V19.5 L1.5 23 Z" fill="none" stroke="#ffffff" stroke-width="1.4"/><path d="M9 10 Q12 6 16 9 M16 6 V9.5 H12.5 M17 14 Q14 18 10 15 M10 18 V14.5 H13.5" fill="none" stroke="#ffffff" stroke-width="1.2"/><circle cx="20" cy="19.5" r="6" fill="#2f7fe0"/></svg>
<svg style="left:1652px;top:1040px;" width="22" height="22" viewBox="0 0 22 22"><path d="M1.5 20 Q2 3 20 1.5" fill="none" stroke="#ffffff" stroke-width="1.4"/><path d="M6.5 20.5 Q7 8.5 20 7" fill="none" stroke="#ffffff" stroke-width="1.4"/><path d="M11.5 20.5 Q12 13.5 20 12.5" fill="none" stroke="#8a8a8a" stroke-width="1.4"/><circle cx="18" cy="19.5" r="1.7" fill="#ffffff"/></svg>
<span class="t" id="t77" style="left:1688.5px;top:1044.57px;font-size:15.87px;color:#ffffff;letter-spacing:-0.438px;">ENG</span>
<span class="t" id="t78" style="left:1769px;top:1029.19px;font-size:17.50px;color:#ffffff;letter-spacing:-0.021px;">2:52</span>
<span class="t" id="t79" style="left:1742px;top:1056.19px;font-size:17.50px;color:#ffffff;letter-spacing:-0.010px;">08.02.2026</span>
<svg style="left:1857px;top:1038px;" width="26" height="25" viewBox="0 0 26 25"><path d="M0.5 0.5 H25.5 V18 H11 L6 23.5 V18 H0.5 Z" fill="#ffffff"/><path d="M5 5.5 H21 M5 9.5 H21 M5 13.5 H21" stroke="#1e201e" stroke-width="1.3"/></svg>
<div style="left:1869px;top:1050px;width:24px;height:24px;border-radius:50%;background:#1e201e;border:1.5px solid #cfcfcf;box-sizing:border-box;"></div>
<span class="t" id="t80" style="left:1876px;top:1054.61px;font-size:17.00px;color:#ffffff;font-weight:700;">4</span>
<div style="left:1912px;top:1021px;width:1px;height:59px;background:#6a6a6a;"></div>
<div style="left:50.7px;top:39.7px;width:696.3px;height:619.4px;background:#f0f0f0;border:1px solid #ffffff;box-sizing:border-box;z-index:50;"></div>
<div style="left:51px;top:40px;width:696px;height:46px;background:#ffffff;z-index:50;"></div>
<span class="t" id="t81" style="left:63px;top:55.93px;font-size:17.80px;color:#999999;z-index:50;-webkit-text-stroke:0.22px currentColor;-webkit-text-stroke:0;letter-spacing:0.102px;">betwatch.fr</span>
<div style="left:565px;top:62px;width:15px;height:1px;background:#8a8a8a;z-index:50;"></div>
<div style="left:634px;top:55.5px;width:15.5px;height:15px;border:1px solid #e2e2e2;box-sizing:border-box;z-index:50;"></div>
<svg style="left:705px;top:55px;z-index:50;" width="16" height="16" viewBox="0 0 16 16"><path d="M0.5 0.5 L15.5 15.5 M15.5 0.5 L0.5 15.5" stroke="#6a6a6a" stroke-width="1.1"/></svg>
<div style="left:55.5px;top:93px;width:685.5px;height:30.5px;background:#ffffff;border:1.5px solid #7a7a7a;box-sizing:border-box;z-index:50;"></div>
<span class="t" id="t82" style="left:61px;top:99.69px;font-size:17.50px;color:#101010;z-index:50;-webkit-text-stroke:0.22px currentColor;letter-spacing:-0.825px;">Toluca - Cruz Azul</span>
<div style="left:57px;top:143px;width:19.5px;height:19.5px;background:#ffffff;border:1.5px solid #333333;box-sizing:border-box;z-index:50;"></div>
<span class="t" id="t83" style="left:86px;top:145.19px;font-size:17.50px;color:#101010;z-index:50;-webkit-text-stroke:0.22px currentColor;letter-spacing:-0.727px;">Кф, пониж:</span>
<div style="left:177px;top:139px;width:94.5px;height:28.5px;background:#ffffff;border:1px solid #abadb3;box-sizing:border-box;z-index:50;"></div>
<span class="t" id="t84" style="left:200px;top:144.69px;font-size:17.50px;color:#101010;z-index:50;-webkit-text-stroke:0.22px currentColor;letter-spacing:-0.664px;">0,0</span>
<div style="left:248px;top:141px;width:21px;height:24.5px;background:#f0f0f0;border:1px solid #d0d0d0;box-sizing:border-box;z-index:50;"></div>
<div style="left:248px;top:152.75px;width:21px;height:1px;background:#d0d0d0;z-index:50;"></div>
<svg style="left:254.5px;top:145.5px;z-index:50;" width="8" height="5" viewBox="0 0 8 5"><path d="M4 0 L8 5 H0 Z" fill="#1a1a1a"/></svg>
<svg style="left:254.5px;top:156.0px;z-index:50;" width="8" height="5" viewBox="0 0 8 5"><path d="M4 5 L8 0 H0 Z" fill="#1a1a1a"/></svg>
<div style="left:297px;top:143px;width:19.5px;height:19.5px;background:#ffffff;border:1.5px solid #333333;box-sizing:border-box;z-index:50;"></div>
<svg style="left:299.5px;top:146.5px;z-index:50;" width="15" height="13" viewBox="0 0 15 13"><path d="M1 6.5 L5.2 11 L14 1.2" fill="none" stroke="#333333" stroke-width="1.5"/></svg>
<span class="t" id="t85" style="left:324px;top:145.19px;font-size:17.50px;color:#101010;z-index:50;-webkit-text-stroke:0.22px currentColor;letter-spacing:-0.725px;">Сумма, повыш:</span>
<div style="left:449px;top:139px;width:111.5px;height:28.5px;background:#ffffff;border:1px solid #abadb3;box-sizing:border-box;z-index:50;"></div>
<span class="t" id="t86" style="left:475px;top:144.69px;font-size:17.50px;color:#101010;z-index:50;-webkit-text-stroke:0.22px currentColor;letter-spacing:-1.479px;">1000</span>
<div style="left:537px;top:141px;width:21px;height:24.5px;background:#f0f0f0;border:1px solid #d0d0d0;box-sizing:border-box;z-index:50;"></div>
<div style="left:537px;top:152.75px;width:21px;height:1px;background:#d0d0d0;z-index:50;"></div>
<svg style="left:543.5px;top:145.5px;z-index:50;" width="8" height="5" viewBox="0 0 8 5"><path d="M4 0 L8 5 H0 Z" fill="#1a1a1a"/></svg>
<svg style="left:543.5px;top:156.0px;z-index:50;" width="8" height="5" viewBox="0 0 8 5"><path d="M4 5 L8 0 H0 Z" fill="#1a1a1a"/></svg>
<span class="t" id="t87" style="left:588px;top:144.69px;font-size:17.50px;color:#101010;z-index:50;-webkit-text-stroke:0.22px currentColor;letter-spacing:-0.799px;">Мин кф:</span>
<div style="left:660px;top:137.5px;width:80.5px;height:28.5px;background:#ffffff;border:1px solid #abadb3;box-sizing:border-box;z-index:50;"></div>
<span class="t" id="t88" style="left:677.5px;top:143.19px;font-size:17.50px;color:#101010;z-index:50;-webkit-text-stroke:0.22px currentColor;letter-spacing:-1.414px;">1,5</span>
<div style="left:717px;top:139.5px;width:21px;height:24.5px;background:#f0f0f0;border:1px solid #d0d0d0;box-sizing:border-box;z-index:50;"></div>
<div style="left:717px;top:151.25px;width:21px;height:1px;background:#d0d0d0;z-index:50;"></div>
<svg style="left:723.5px;top:144.0px;z-index:50;" width="8" height="5" viewBox="0 0 8 5"><path d="M4 0 L8 5 H0 Z" fill="#1a1a1a"/></svg>
<svg style="left:723.5px;top:154.5px;z-index:50;" width="8" height="5" viewBox="0 0 8 5"><path d="M4 5 L8 0 H0 Z" fill="#1a1a1a"/></svg>
<span class="t" id="t89" style="left:314.5px;top:191.69px;font-size:17.50px;color:#101010;z-index:50;-webkit-text-stroke:0.22px currentColor;letter-spacing:-0.325px;">Лиги, исключить:</span>
<div style="left:55.5px;top:214px;width:685.5px;height:165.5px;background:#ffffff;border:1.5px solid #7a7a7a;box-sizing:border-box;z-index:50;"></div>
<div style="left:714px;top:215.5px;width:25.5px;height:162.5px;background:#f0f0f0;z-index:50;"></div>
<svg style="left:720px;top:225px;z-index:50;" width="13" height="8" viewBox="0 0 13 8"><path d="M1 7 L6.5 1.2 L12 7" fill="none" stroke="#c2c2c2" stroke-width="1.6"/></svg>
<svg style="left:720px;top:360.5px;z-index:50;" width="13" height="8" viewBox="0 0 13 8"><path d="M1 1 L6.5 6.8 L12 1" fill="none" stroke="#c2c2c2" stroke-width="1.6"/></svg>
<div style="left:55.5px;top:390px;width:685.5px;height:219px;background:#ffffff;border:1.5px solid #7a7a7a;box-sizing:border-box;z-index:50;"></div>
<div style="left:714px;top:391.5px;width:25.5px;height:216px;background:#f0f0f0;z-index:50;"></div>
<svg style="left:720px;top:401px;z-index:50;" width="13" height="8" viewBox="0 0 13 8"><path d="M1 7 L6.5 1.2 L12 7" fill="none" stroke="#c2c2c2" stroke-width="1.6"/></svg>
<svg style="left:720px;top:590px;z-index:50;" width="13" height="8" viewBox="0 0 13 8"><path d="M1 1 L6.5 6.8 L12 1" fill="none" stroke="#c2c2c2" stroke-width="1.6"/></svg>
<div style="left:196.5px;top:620px;width:109.5px;height:31.5px;background:#cccccc;border:1px solid #bfbfbf;box-sizing:border-box;z-index:50;"></div>
<span class="t" id="t90" style="left:224px;top:627.69px;font-size:17.50px;color:#838383;z-index:50;-webkit-text-stroke:0.22px currentColor;letter-spacing:-0.750px;">Запуск</span>
<div style="left:493.5px;top:620px;width:91px;height:31.5px;background:#e1e1e1;border:2.5px solid #0078d7;box-sizing:border-box;z-index:50;"></div>
<span class="t" id="t91" style="left:519.5px;top:627.69px;font-size:17.50px;color:#101010;z-index:50;-webkit-text-stroke:0.22px currentColor;letter-spacing:-1.224px;">Стоп</span>
<div style="left:872px;top:453px;width:201.5px;height:198px;background:#ffffff;z-index:60;"></div>
<div style="left:872px;top:587px;width:201.5px;height:64px;background:#f0f0f0;z-index:60;"></div>
<svg style="left:1041px;top:468px;z-index:60;" width="16" height="16" viewBox="0 0 16 16"><path d="M0.5 0.5 L15.5 15.5 M15.5 0.5 L0.5 15.5" stroke="#1a1a1a" stroke-width="1.2"/></svg>
<span class="t" id="t92" style="left:888.5px;top:535.69px;font-size:17.50px;color:#101010;z-index:60;-webkit-text-stroke:0.22px currentColor;-webkit-text-stroke:0;letter-spacing:-0.325px;">Toluca - Cruz Azul</span>
<div style="left:939.5px;top:602.5px;width:109.5px;height:32px;background:#e5f1fb;border:1.5px solid #0078d7;box-sizing:border-box;z-index:60;"></div>
<span class="t" id="t93" style="left:983px;top:612.03px;font-size:16.50px;color:#101010;z-index:60;-webkit-text-stroke:0.22px currentColor;-webkit-text-stroke:0;letter-spacing:-0.844px;">OK</span>
<svg style="left:968px;top:616px;z-index:61;" width="20" height="30" viewBox="0 0 20 30"><path d="M1.5 1.5 V23.5 L6.5 18.8 L10.6 28 L14 26.5 L10 17.6 H17 Z" fill="#ffffff" stroke="#000000" stroke-width="1.3" stroke-linejoin="miter"/></svg>
</body></html>
